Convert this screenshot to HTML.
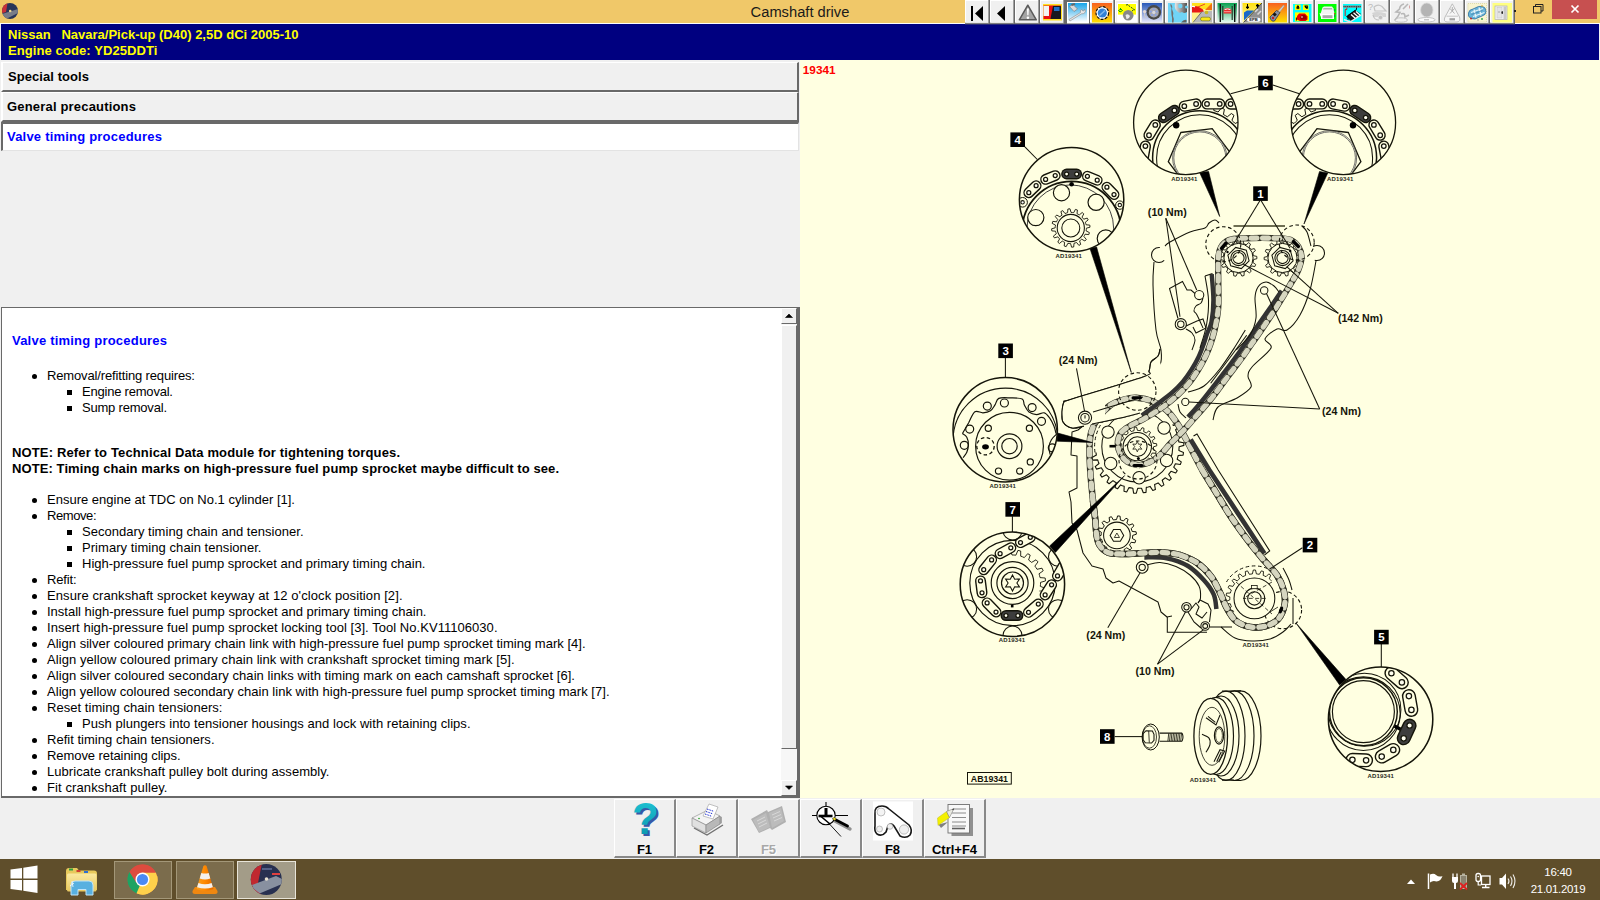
<!DOCTYPE html>
<html><head><meta charset="utf-8"><title>Camshaft drive</title>
<style>
*{margin:0;padding:0;box-sizing:border-box}
html,body{width:1600px;height:900px;overflow:hidden;background:#f0f0f0;font-family:"Liberation Sans",sans-serif}
.abs{position:absolute}
#titlebar{left:0;top:0;width:1600px;height:23px;background:#f0c869}
#title{left:700px;top:2.6px;width:200px;text-align:center;font-size:14.7px;color:#1a1a1a;line-height:19px}
#closebtn{left:1552px;top:0;width:45px;height:19px;background:#c75050}
#hdr{left:1px;top:24px;width:1598px;height:36px;background:#000080;color:#ffff00;font-weight:bold;font-size:13px;line-height:16px;padding:3px 0 0 7px;white-space:pre}
#hdrline{left:0;top:23px;width:1600px;height:1px;background:#fdfdfd}
#left{left:0;top:60px;width:800px;height:738px;background:#f0f0f0}
.mbtn{left:1px;width:798px;height:30px;background:#f0f0f0;border-top:1px solid #fff;border-left:2px solid #fff;border-right:2px solid #696969;border-bottom:2px solid #696969;font-weight:bold;font-size:13px;line-height:16px;padding:6px 0 0 5px;color:#000}
#msel{left:1px;top:122px;width:798px;height:29px;background:#fff;border-top:2px solid #696969;border-left:2px solid #696969;border-right:1px solid #e3e3e3;border-bottom:1px solid #e3e3e3;font-weight:bold;font-size:13px;line-height:16px;padding:5px 0 0 4px;color:#0000ff}
#txt{left:1px;top:307px;width:799px;height:491px;background:#fff;border-top:1px solid #696969;border-left:1px solid #696969;border-right:3px solid #696969;border-bottom:2px solid #696969;overflow:hidden}
#right{left:800px;top:60px;width:800px;height:738px;background:#ffffe1}
#botbar{left:0;top:798px;width:1600px;height:61px;background:#f0f0f0}
#taskbar{left:0;top:859px;width:1600px;height:41px;background:#5f4e2b}
.ln{position:absolute;white-space:pre;font-size:13px;line-height:16px;color:#000}
.b{font-weight:bold}
.sbb{width:16px;background:#f0f0f0;border-left:1px solid #fff;border-top:1px solid #fff;border-right:1.500px solid #696969;border-bottom:1.500px solid #696969}
</style></head><body>
<div id="titlebar" class="abs"></div>
<div id="title" class="abs">Camshaft drive</div>
<div id="closebtn" class="abs"></div>
<div id="hdrline" class="abs"></div>
<div id="hdr" class="abs">Nissan   Navara/Pick-up (D40) 2,5D dCi 2005-10
<span style="letter-spacing:0.09px">Engine code: YD25DDTi</span></div>
<div id="left" class="abs"></div>
<div class="abs mbtn" style="top:62px;padding-top:6px;letter-spacing:0.07px">Special tools</div>
<div class="abs mbtn" style="top:92px;padding-left:4px;padding-top:6px;letter-spacing:0.18px">General precautions</div>
<div id="msel" class="abs" style="letter-spacing:0.21px">Valve timing procedures</div>
<div id="txt" class="abs"><div class="ln b" style="left:10px;top:25px;letter-spacing:0.214px;color:#0000ff">Valve timing procedures</div>
<div class="ln" style="left:45px;top:60px;letter-spacing:-0.144px">Removal/refitting requires:</div>
<div class="abs" style="left:30px;top:66px;width:5px;height:5px;border-radius:50%;background:#000"></div>
<div class="ln" style="left:80px;top:76px;letter-spacing:-0.211px">Engine removal.</div>
<div class="abs" style="left:65px;top:82px;width:5px;height:5px;background:#000"></div>
<div class="ln" style="left:80px;top:92px;letter-spacing:-0.202px">Sump removal.</div>
<div class="abs" style="left:65px;top:98px;width:5px;height:5px;background:#000"></div>
<div class="ln b" style="left:10px;top:137px;letter-spacing:0.141px">NOTE: Refer to Technical Data module for tightening torques.</div>
<div class="ln b" style="left:10px;top:153px;letter-spacing:0.092px">NOTE: Timing chain marks on high-pressure fuel pump sprocket maybe difficult to see.</div>
<div class="ln" style="left:45px;top:184px;letter-spacing:0.009px">Ensure engine at TDC on No.1 cylinder [1].</div>
<div class="abs" style="left:30px;top:190px;width:5px;height:5px;border-radius:50%;background:#000"></div>
<div class="ln" style="left:45px;top:200px;letter-spacing:-0.422px">Remove:</div>
<div class="abs" style="left:30px;top:206px;width:5px;height:5px;border-radius:50%;background:#000"></div>
<div class="ln" style="left:80px;top:216px;letter-spacing:0.030px">Secondary timing chain and tensioner.</div>
<div class="abs" style="left:65px;top:222px;width:5px;height:5px;background:#000"></div>
<div class="ln" style="left:80px;top:232px;letter-spacing:0.058px">Primary timing chain tensioner.</div>
<div class="abs" style="left:65px;top:238px;width:5px;height:5px;background:#000"></div>
<div class="ln" style="left:80px;top:248px;letter-spacing:-0.008px">High-pressure fuel pump sprocket and primary timing chain.</div>
<div class="abs" style="left:65px;top:254px;width:5px;height:5px;background:#000"></div>
<div class="ln" style="left:45px;top:264px;letter-spacing:-0.169px">Refit:</div>
<div class="abs" style="left:30px;top:270px;width:5px;height:5px;border-radius:50%;background:#000"></div>
<div class="ln" style="left:45px;top:280px;letter-spacing:0.091px">Ensure crankshaft sprocket keyway at 12 o'clock position [2].</div>
<div class="abs" style="left:30px;top:286px;width:5px;height:5px;border-radius:50%;background:#000"></div>
<div class="ln" style="left:45px;top:296px;letter-spacing:0.002px">Install high-pressure fuel pump sprocket and primary timing chain.</div>
<div class="abs" style="left:30px;top:302px;width:5px;height:5px;border-radius:50%;background:#000"></div>
<div class="ln" style="left:45px;top:312px;letter-spacing:0.042px">Insert high-pressure fuel pump sprocket locking tool [3]. Tool No.KV11106030.</div>
<div class="abs" style="left:30px;top:318px;width:5px;height:5px;border-radius:50%;background:#000"></div>
<div class="ln" style="left:45px;top:328px;letter-spacing:0.018px">Align silver coloured primary chain link with high-pressure fuel pump sprocket timing mark [4].</div>
<div class="abs" style="left:30px;top:334px;width:5px;height:5px;border-radius:50%;background:#000"></div>
<div class="ln" style="left:45px;top:344px;letter-spacing:0.063px">Align yellow coloured primary chain link with crankshaft sprocket timing mark [5].</div>
<div class="abs" style="left:30px;top:350px;width:5px;height:5px;border-radius:50%;background:#000"></div>
<div class="ln" style="left:45px;top:360px;letter-spacing:0.062px">Align silver coloured secondary chain links with timing mark on each camshaft sprocket [6].</div>
<div class="abs" style="left:30px;top:366px;width:5px;height:5px;border-radius:50%;background:#000"></div>
<div class="ln" style="left:45px;top:376px;letter-spacing:0.034px">Align yellow coloured secondary chain link with high-pressure fuel pump sprocket timing mark [7].</div>
<div class="abs" style="left:30px;top:382px;width:5px;height:5px;border-radius:50%;background:#000"></div>
<div class="ln" style="left:45px;top:392px;letter-spacing:0.046px">Reset timing chain tensioners:</div>
<div class="abs" style="left:30px;top:398px;width:5px;height:5px;border-radius:50%;background:#000"></div>
<div class="ln" style="left:80px;top:408px;letter-spacing:0.039px">Push plungers into tensioner housings and lock with retaining clips.</div>
<div class="abs" style="left:65px;top:414px;width:5px;height:5px;background:#000"></div>
<div class="ln" style="left:45px;top:424px;letter-spacing:0.020px">Refit timing chain tensioners.</div>
<div class="abs" style="left:30px;top:430px;width:5px;height:5px;border-radius:50%;background:#000"></div>
<div class="ln" style="left:45px;top:440px;letter-spacing:-0.074px">Remove retaining clips.</div>
<div class="abs" style="left:30px;top:446px;width:5px;height:5px;border-radius:50%;background:#000"></div>
<div class="ln" style="left:45px;top:456px;letter-spacing:0.049px">Lubricate crankshaft pulley bolt during assembly.</div>
<div class="abs" style="left:30px;top:462px;width:5px;height:5px;border-radius:50%;background:#000"></div>
<div class="ln" style="left:45px;top:472px;letter-spacing:0.106px">Fit crankshaft pulley.</div>
<div class="abs" style="left:30px;top:478px;width:5px;height:5px;border-radius:50%;background:#000"></div><div class="abs" style="left:779px;top:0;width:16px;height:488px;background:#f7f7f7"></div>
<div class="abs sbb" style="left:779px;top:0;height:16px"></div>
<div class="abs sbb" style="left:779px;top:17px;height:424px"></div>
<div class="abs sbb" style="left:779px;top:472px;height:16px"></div>
<svg class="abs" style="left:779px;top:0" width="16" height="488" viewBox="0 0 16 488"><path d="M4.500 9.500 L8 6 L11.500 9.500Z M4.500 478 L8 481.500 L11.500 478Z" fill="#000" stroke="#000" stroke-width="0.600"/></svg></div>
<div id="right" class="abs"><svg class="abs" style="left:0;top:0" width="800" height="738" viewBox="800 60 800 738" font-family="Liberation Sans, sans-serif"><defs><clipPath id="cpg"><path d="M1137.3 446.6 L1189.9 413.7 L1199.3 446.6 L1191.0 477.6 L1168.3 500.3 L1137.3 508.6 L1106.3 500.3 L1083.6 477.6 L1075.9 455.2Z"/></clipPath>
<clipPath id="ccr"><path d="M1254.4 598.4 L1215 625 L1215 560 L1275 560 L1274 578Z"/></clipPath><clipPath id="c6l"><circle cx="1185.8" cy="122.4" r="52.2"/></clipPath>
<clipPath id="t6"><path d="M1199.8 157.9 L1218.8 87.9 L1269.8 87.9 L1269.8 121.9Z"/></clipPath>
<clipPath id="c4"><circle cx="1071.6" cy="199.6" r="52.2"/></clipPath>
<clipPath id="c3"><circle cx="1005.2" cy="429.8" r="52.2"/></clipPath>
<clipPath id="c7"><circle cx="1012.4" cy="584.3" r="52.2"/></clipPath>
<clipPath id="c7t"><path d="M1004.5 543.0 L1052.5 543.0 L1052.5 595.0 L1024.5 587.0 L1010.5 569.0Z"/></clipPath>
<clipPath id="c5"><circle cx="1380.6" cy="719.3" r="52.2"/></clipPath></defs><path d="M1219.0 223.0 C1218.3 222.5 1216.7 220.0 1215.0 220.0 C1213.3 220.0 1210.7 221.7 1209.0 223.0 C1207.3 224.3 1208.2 226.5 1205.0 228.0 C1201.8 229.5 1195.8 229.7 1190.0 232.0 C1184.2 234.3 1174.2 239.7 1170.0 242.0 C1165.8 244.3 1165.8 245.3 1165.0 246.0" fill="none" stroke="#15150a" stroke-width="1.05" />
<circle cx="1159.0" cy="255.0" r="7.5" fill="none" stroke="#15150a" stroke-width="1.05" stroke-dasharray="30 17" stroke-dashoffset="-6"/>
<path d="M1154.0 262.0 C1153.8 265.8 1152.7 273.7 1153.0 285.0 C1153.3 296.3 1154.7 319.2 1156.0 330.0 C1157.3 340.8 1160.3 344.2 1161.0 350.0 C1161.7 355.8 1162.2 360.0 1160.0 365.0 C1157.8 370.0 1151.3 376.8 1148.0 380.0 C1144.7 383.2 1141.3 383.3 1140.0 384.0" fill="none" stroke="#15150a" stroke-width="1.05" />
<circle cx="1317.0" cy="253.0" r="7.5" fill="none" stroke="#15150a" stroke-width="1.05" stroke-dasharray="30 17" stroke-dashoffset="16"/>
<path d="M1302.0 226.0 C1302.8 227.0 1305.5 228.7 1307.0 232.0 C1308.5 235.3 1310.3 243.7 1311.0 246.0" fill="none" stroke="#15150a" stroke-width="1.05" />
<path d="M1316.0 261.0 C1315.0 265.8 1312.7 281.0 1310.0 290.0 C1307.3 299.0 1303.8 308.3 1300.0 315.0 C1296.2 321.7 1290.8 327.7 1287.0 330.0 C1283.2 332.3 1280.7 327.5 1277.0 329.0 C1273.3 330.5 1266.0 335.8 1265.0 339.0 C1264.0 342.2 1273.2 343.3 1271.0 348.0 C1268.8 352.7 1255.8 362.3 1252.0 367.0 C1248.2 371.7 1248.2 372.7 1248.0 376.0 C1247.8 379.3 1252.8 383.3 1251.0 387.0 C1249.2 390.7 1242.5 394.7 1237.0 398.0 C1231.5 401.3 1222.0 403.3 1218.0 407.0 C1214.0 410.7 1213.8 417.8 1213.0 420.0" fill="none" stroke="#15150a" stroke-width="1.05" />
<path d="M1233.5 226 H1285" fill="none" stroke="#6e6e52" stroke-width="2.2" />
<path d="M1140.0 384.0 C1138.8 385.3 1134.7 388.7 1133.0 392.0 C1131.3 395.3 1130.8 400.7 1130.0 404.0 C1129.2 407.3 1128.3 410.7 1128.0 412.0" fill="none" stroke="#15150a" stroke-width="1.05" />
<path d="M1084.0 425.0 L1078.0 430.0 L1072.0 432.0 L1071.0 455.0 L1077.0 456.0 L1077.0 488.0 L1069.0 492.0 L1071.0 502.0 L1072.0 523.0 L1077.0 530.0 L1083.0 553.0 L1092.0 566.0 L1103.0 569.0 L1106.0 578.0 L1113.0 583.0 L1119.0 581.0 L1158.0 602.0 L1161.0 612.0 L1167.0 617.0 L1172.0 616.0" fill="none" stroke="#15150a" stroke-width="1.05" stroke-linejoin="round"/>
<path d="M1167.3 617 V632.2 H1207" fill="none" stroke="#15150a" stroke-width="1.05" />
<path d="M1210 627 H1232" fill="none" stroke="#15150a" stroke-width="1.05" />
<path d="M1221.0 627.0 C1223.3 628.8 1229.8 635.7 1235.0 638.0 C1240.2 640.3 1246.2 640.8 1252.0 641.0 C1257.8 641.2 1264.8 640.5 1270.0 639.0 C1275.2 637.5 1279.5 634.5 1283.0 632.0 C1286.5 629.5 1289.7 625.3 1291.0 624.0" fill="none" stroke="#15150a" stroke-width="1.05" />
<path d="M1293 598 V624" fill="none" stroke="#15150a" stroke-width="1.05" />
<path d="M1283.0 568.0 C1284.0 570.0 1287.5 576.3 1289.0 580.0 C1290.5 583.7 1291.5 588.3 1292.0 590.0" fill="none" stroke="#15150a" stroke-width="1.05" />
<path d="M1062.0 412.0 C1062.3 410.3 1062.3 404.2 1064.0 402.0 C1065.7 399.8 1058.8 403.2 1072.0 399.0 C1085.2 394.8 1130.2 381.7 1143.0 377.0 C1155.8 372.3 1147.7 373.5 1149.0 371.0 C1150.3 368.5 1149.5 364.5 1151.0 362.0 C1152.5 359.5 1156.5 358.2 1158.0 356.0 C1159.5 353.8 1159.7 350.2 1160.0 349.0" fill="none" stroke="#15150a" stroke-width="1.05" />
<path d="M1062.0 412.0 C1062.2 413.7 1061.3 419.3 1063.0 422.0 C1064.7 424.7 1068.5 427.3 1072.0 428.0 C1075.5 428.7 1082.0 426.3 1084.0 426.0" fill="none" stroke="#15150a" stroke-width="1.05" />
<path d="M1093.0 412.0 L1143.0 397.0" fill="none" stroke="#15150a" stroke-width="1.05" />
<path d="M1092.0 424.0 C1096.7 423.0 1112.0 419.8 1120.0 418.0 C1128.0 416.2 1136.7 413.8 1140.0 413.0" fill="none" stroke="#15150a" stroke-width="1.05" />
<g clip-path="url(#cpg)">
<path d="M1179.0 448.7 L1178.9 450.6 L1183.5 452.4 L1183.1 455.1 L1178.2 455.5 L1177.7 457.3 L1177.2 459.2 L1181.3 461.9 L1180.3 464.5 L1175.4 463.8 L1174.6 465.5 L1173.7 467.2 L1177.2 470.7 L1175.7 473.0 L1171.0 471.3 L1169.8 472.8 L1168.6 474.3 L1171.3 478.5 L1169.4 480.4 L1165.1 477.8 L1163.7 479.0 L1162.2 480.2 L1163.9 484.9 L1161.6 486.4 L1158.1 482.9 L1156.4 483.8 L1154.6 484.6 L1155.4 489.6 L1152.8 490.5 L1150.1 486.4 L1148.2 487.0 L1146.3 487.4 L1146.0 492.4 L1143.3 492.8 L1141.5 488.2 L1139.6 488.3 L1137.7 488.4 L1136.3 493.2 L1133.6 493.1 L1132.8 488.2 L1130.9 487.9 L1129.0 487.6 L1126.7 492.0 L1124.0 491.3 L1124.2 486.3 L1122.4 485.7 L1120.6 484.9 L1117.5 488.8 L1115.0 487.5 L1116.3 482.7 L1114.6 481.7 L1113.0 480.6 L1109.1 483.7 L1107.0 482.0 L1109.2 477.6 L1107.8 476.2 L1106.5 474.8 L1102.0 477.1 L1100.3 474.9 L1103.4 471.0 L1102.3 469.4 L1101.3 467.8 L1096.5 469.1 L1095.2 466.6 L1099.0 463.5 L1098.3 461.7 L1097.7 459.9 L1092.7 460.1 L1092.0 457.4 L1096.4 455.1 L1096.0 453.2 L1095.8 451.3 L1090.9 450.5 L1090.7 447.8 L1095.5 446.4 L1095.6 444.5 L1095.7 442.6 L1091.1 440.8 L1091.5 438.1 L1096.4 437.7 L1096.9 435.9 L1097.4 434.0 L1093.3 431.3 L1094.3 428.7 L1099.2 429.4 L1100.0 427.7 L1100.9 426.0 L1097.4 422.5 L1098.9 420.2 L1103.6 421.9 L1104.8 420.4 L1106.0 418.9 L1103.3 414.7 L1105.2 412.8 L1109.5 415.4 L1110.9 414.2 L1112.4 413.0 L1110.7 408.3 L1113.0 406.8 L1116.5 410.3 L1118.2 409.4 L1120.0 408.6 L1119.2 403.6 L1121.8 402.7 L1124.5 406.8 L1126.4 406.2 L1128.3 405.8 L1128.6 400.8 L1131.3 400.4 L1133.1 405.0 L1135.0 404.9 L1136.9 404.8 L1138.3 400.0 L1141.0 400.1 L1141.8 405.0 L1143.7 405.3 L1145.6 405.6 L1147.9 401.2 L1150.6 401.9 L1150.4 406.9 L1152.2 407.5 L1154.0 408.3 L1157.1 404.4 L1159.6 405.7 L1158.3 410.5 L1160.0 411.5 L1161.6 412.6 L1165.5 409.5 L1167.6 411.2 L1165.4 415.6 L1166.8 417.0 L1168.1 418.4 L1172.6 416.1 L1174.3 418.3 L1171.2 422.2 L1172.3 423.8 L1173.3 425.4 L1178.1 424.1 L1179.4 426.6 L1175.6 429.7 L1176.3 431.5 L1176.9 433.3 L1181.9 433.1 L1182.6 435.8 L1178.2 438.1 L1178.6 440.0 L1178.8 441.9 L1183.7 442.7 L1183.9 445.4 L1179.1 446.8Z" fill="none" stroke="#15150a" stroke-width="1.1" stroke-linejoin="round" />
</g>
<path d="M1095.0 452.5 A42.7 42.7 0 0 1 1158.6 409.6" fill="none" stroke="#15150a" stroke-width="1" stroke-dasharray="3.6 2.6"/>
<circle cx="1137.3" cy="446.6" r="35.5" fill="none" stroke="#15150a" stroke-width="1.05" />
<circle cx="1108.0" cy="432.1" r="6.2" fill="#ffffe1" stroke="#15150a" stroke-width="1.05" />
<circle cx="1164.0" cy="428.0" r="6.2" fill="#ffffe1" stroke="#15150a" stroke-width="1.05" />
<circle cx="1110.7" cy="463.5" r="6.2" fill="#ffffe1" stroke="#15150a" stroke-width="1.05" />
<circle cx="1166.6" cy="460.5" r="6.2" fill="#ffffe1" stroke="#15150a" stroke-width="1.05" />
<circle cx="1139.1" cy="477.8" r="6.2" fill="#ffffe1" stroke="#15150a" stroke-width="1.05" />
<path d="M1072 399.5 L1143 377 L1150 372 L1158 356 L1170 392 L1141.8 413.5 L1092 424 L1074 428.3 Q1063 424 1062 412 Q1062.5 402 1072 399.5Z" fill="#ffffe1" stroke="none"/>
<path d="M1092.9 500.0 C1092.5 495.5 1091.0 481.9 1090.4 473.0 C1089.8 464.1 1089.3 453.4 1089.5 446.6 C1089.7 439.8 1089.9 436.8 1091.3 432.0 C1092.7 427.2 1094.9 422.4 1098.0 418.0 C1101.1 413.6 1105.7 408.6 1110.0 405.5 C1114.3 402.4 1119.6 400.8 1124.0 399.5 C1128.4 398.2 1131.7 397.5 1136.4 397.8 C1141.1 398.1 1147.4 399.2 1152.4 401.3 C1157.4 403.4 1162.4 406.5 1166.6 410.2 C1170.8 413.9 1174.0 418.5 1177.3 423.5 C1180.6 428.5 1182.3 432.2 1186.5 440.0 C1190.7 447.8 1197.2 461.1 1202.2 470.0 C1207.2 478.9 1211.7 485.4 1216.4 493.1 C1221.1 500.8 1225.3 508.2 1230.6 516.2 C1235.9 524.2 1242.8 533.7 1248.4 541.1 C1254.0 548.5 1259.7 555.1 1264.4 560.7 C1269.1 566.3 1273.6 570.0 1276.8 574.9 C1280.0 579.8 1282.4 585.4 1283.7 590.4 C1285.0 595.4 1285.5 600.0 1284.6 604.7 C1283.7 609.5 1281.5 615.4 1278.4 618.9 C1275.3 622.4 1270.7 624.7 1266.0 626.0 C1261.3 627.3 1255.0 627.8 1250.0 626.9 C1245.0 626.0 1239.6 623.8 1235.8 620.7 C1232.0 617.6 1229.6 613.0 1226.9 608.2 C1224.2 603.5 1222.5 597.5 1219.8 592.2 C1217.1 586.9 1214.8 581.2 1210.9 576.2 C1207.0 571.2 1201.9 566.1 1196.6 562.5 C1191.3 558.9 1184.8 556.2 1178.9 554.5 C1173.0 552.8 1167.0 552.6 1161.1 552.4 C1155.2 552.1 1149.8 552.7 1143.3 553.0 C1136.8 553.3 1127.9 554.1 1122.0 554.0 C1116.1 553.9 1111.5 554.0 1107.8 552.5 C1104.0 551.0 1101.4 547.9 1099.5 545.0 C1097.6 542.1 1097.3 539.5 1096.6 535.3 C1095.9 531.1 1095.9 525.9 1095.3 520.0 C1094.7 514.1 1093.3 503.3 1092.9 500.0" fill="none" stroke="#323226" stroke-width="6.5" />
<path d="M1092.9 500.0 C1092.5 495.5 1091.0 481.9 1090.4 473.0 C1089.8 464.1 1089.3 453.4 1089.5 446.6 C1089.7 439.8 1089.9 436.8 1091.3 432.0 C1092.7 427.2 1094.9 422.4 1098.0 418.0 C1101.1 413.6 1105.7 408.6 1110.0 405.5 C1114.3 402.4 1119.6 400.8 1124.0 399.5 C1128.4 398.2 1131.7 397.5 1136.4 397.8 C1141.1 398.1 1147.4 399.2 1152.4 401.3 C1157.4 403.4 1162.4 406.5 1166.6 410.2 C1170.8 413.9 1174.0 418.5 1177.3 423.5 C1180.6 428.5 1182.3 432.2 1186.5 440.0 C1190.7 447.8 1197.2 461.1 1202.2 470.0 C1207.2 478.9 1211.7 485.4 1216.4 493.1 C1221.1 500.8 1225.3 508.2 1230.6 516.2 C1235.9 524.2 1242.8 533.7 1248.4 541.1 C1254.0 548.5 1259.7 555.1 1264.4 560.7 C1269.1 566.3 1273.6 570.0 1276.8 574.9 C1280.0 579.8 1282.4 585.4 1283.7 590.4 C1285.0 595.4 1285.5 600.0 1284.6 604.7 C1283.7 609.5 1281.5 615.4 1278.4 618.9 C1275.3 622.4 1270.7 624.7 1266.0 626.0 C1261.3 627.3 1255.0 627.8 1250.0 626.9 C1245.0 626.0 1239.6 623.8 1235.8 620.7 C1232.0 617.6 1229.6 613.0 1226.9 608.2 C1224.2 603.5 1222.5 597.5 1219.8 592.2 C1217.1 586.9 1214.8 581.2 1210.9 576.2 C1207.0 571.2 1201.9 566.1 1196.6 562.5 C1191.3 558.9 1184.8 556.2 1178.9 554.5 C1173.0 552.8 1167.0 552.6 1161.1 552.4 C1155.2 552.1 1149.8 552.7 1143.3 553.0 C1136.8 553.3 1127.9 554.1 1122.0 554.0 C1116.1 553.9 1111.5 554.0 1107.8 552.5 C1104.0 551.0 1101.4 547.9 1099.5 545.0 C1097.6 542.1 1097.3 539.5 1096.6 535.3 C1095.9 531.1 1095.9 525.9 1095.3 520.0 C1094.7 514.1 1093.3 503.3 1092.9 500.0" fill="none" stroke="#d6d6c0" stroke-width="5.30" stroke-dasharray="5.65 5.65" stroke-linecap="round" />
<path d="M1190.6 439.5 L1209.3 470.0 L1264.4 553.5" fill="none" stroke="#333333" stroke-width="4.7" stroke-linejoin="round"/>
<path d="M1193.5 436.0 L1197.0 434.0 L1218.2 470.0 L1269.7 550.9 L1264.5 555.0" fill="none" stroke="#15150a" stroke-width="1.05" />
<path d="M1144.4 557.4 C1148.1 557.5 1159.3 556.8 1166.6 558.2 C1173.9 559.6 1181.8 562.3 1188.0 566.0 C1194.2 569.7 1199.7 575.5 1204.0 580.2 C1208.3 584.9 1211.6 589.6 1213.7 594.4 C1215.8 599.2 1216.0 606.6 1216.4 609.0" fill="none" stroke="#333333" stroke-width="4.5" />
<path d="M1147.0 565.0 C1149.2 564.6 1155.2 562.2 1160.0 562.5 C1164.8 562.8 1171.0 564.4 1176.0 566.5 C1181.0 568.6 1186.2 571.8 1190.0 575.0 C1193.8 578.2 1197.2 582.2 1199.0 586.0 C1200.8 589.8 1200.7 595.2 1200.5 598.0 C1200.3 600.8 1198.4 602.2 1198.0 603.0" fill="none" stroke="#15150a" stroke-width="1.05" />
<path d="M1198.0 603.0 L1200.0 600.0 L1208.0 604.0 L1211.0 610.0 L1209.5 622.0" fill="none" stroke="#15150a" stroke-width="1.05" />
<path d="M1191.0 609.0 L1196.0 603.0 L1199.0 607.0 L1196.0 614.0 L1202.0 618.0 L1207.0 612.0" fill="none" stroke="#15150a" stroke-width="1.05" />
<path d="M1188.0 612.0 L1194.0 622.0 L1201.0 628.0" fill="none" stroke="#15150a" stroke-width="1.05" />
<path d="M1211.7 274.2 C1212.0 278.5 1213.4 292.0 1213.4 300.0 C1213.4 308.0 1212.5 316.5 1211.5 322.0 C1210.5 327.5 1208.5 329.4 1207.3 333.0 C1206.0 336.6 1205.4 339.4 1204.0 343.3 C1202.6 347.2 1200.8 352.2 1198.7 356.7 C1196.6 361.1 1194.0 365.8 1191.3 370.0 C1188.6 374.2 1185.9 378.2 1182.7 382.0 C1179.5 385.8 1175.8 389.4 1172.0 392.7 C1168.2 396.0 1165.0 398.2 1160.0 402.0 C1155.0 405.8 1144.8 413.2 1141.8 415.5" fill="none" stroke="#333333" stroke-width="4.4" />
<path d="M1205.0 276.0 C1205.6 280.0 1208.2 291.8 1208.5 300.0 C1208.8 308.2 1207.9 317.0 1206.5 325.0 C1205.1 333.0 1201.1 344.2 1200.0 348.0" fill="none" stroke="#15150a" stroke-width="1.05" />
<path d="M1205 276 L1212.5 273.5" fill="none" stroke="#15150a" stroke-width="1.05" />
<path d="M1281.7 290.8 C1279.8 293.7 1274.1 302.0 1270.0 308.0 C1265.9 314.0 1262.3 319.1 1257.1 326.6 C1251.8 334.2 1244.9 344.4 1238.5 353.3 C1232.1 362.2 1225.2 371.2 1218.5 379.9 C1211.8 388.6 1203.6 399.1 1198.5 405.3 C1193.4 411.5 1189.8 415.1 1188.0 417.0" fill="none" stroke="#333333" stroke-width="4.5" />
<path d="M1245.3 330.0 C1243.5 332.9 1238.9 340.9 1234.7 347.3 C1230.5 353.8 1225.1 362.2 1220.0 368.7 C1214.9 375.1 1209.3 382.1 1204.0 386.0 C1198.7 389.9 1190.7 391.0 1188.0 392.0" fill="none" stroke="#15150a" stroke-width="1.05" />
<path d="M1246.7 335.3 L1210.7 383.3" fill="none" stroke="#15150a" stroke-width="1.05" />
<circle cx="1264.2" cy="290.5" r="3.7" fill="none" stroke="#15150a" stroke-width="1.05" />
<path d="M1236.0 350.0 C1238.3 347.5 1246.7 340.3 1250.0 335.0 C1253.3 329.7 1255.2 324.2 1256.0 318.0 C1256.8 311.8 1254.7 303.2 1255.0 298.0 C1255.3 292.8 1256.2 289.7 1258.0 287.0 C1259.8 284.3 1263.3 282.2 1266.0 282.0 C1268.7 281.8 1271.8 284.3 1274.0 286.0 C1276.2 287.7 1278.2 291.0 1279.0 292.0" fill="none" stroke="#15150a" stroke-width="1.05" />
<path d="M1186.0 418.0 C1185.0 417.0 1181.3 414.3 1180.0 412.0 C1178.7 409.7 1178.3 405.3 1178.0 404.0" fill="none" stroke="#15150a" stroke-width="1.05" />
<circle cx="1185.3" cy="401.9" r="3.6" fill="none" stroke="#15150a" stroke-width="1.05" />
<path d="M1105 389.3 L1072 399.5 Q1062.5 402 1062 412 Q1063 424 1074 428.3 L1092 424 L1105 421Z" fill="#ffffe1" stroke="none"/>
<path d="M1062.0 412.0 C1062.3 410.3 1062.3 404.2 1064.0 402.0 C1065.7 399.8 1058.8 403.2 1072.0 399.0 C1085.2 394.8 1130.2 381.7 1143.0 377.0 C1155.8 372.3 1147.7 373.5 1149.0 371.0 C1150.3 368.5 1149.5 364.5 1151.0 362.0 C1152.5 359.5 1156.5 358.2 1158.0 356.0 C1159.5 353.8 1159.7 350.2 1160.0 349.0" fill="none" stroke="#15150a" stroke-width="1.05" />
<path d="M1062.0 412.0 C1062.2 413.7 1061.3 419.3 1063.0 422.0 C1064.7 424.7 1068.5 427.3 1072.0 428.0 C1075.5 428.7 1082.0 426.3 1084.0 426.0" fill="none" stroke="#15150a" stroke-width="1.05" />
<path d="M1093.0 412.0 L1143.0 397.0" fill="none" stroke="#15150a" stroke-width="1.05" />
<path d="M1092.0 424.0 C1096.7 423.0 1112.0 419.8 1120.0 418.0 C1128.0 416.2 1136.7 413.8 1140.0 413.0" fill="none" stroke="#15150a" stroke-width="1.05" />
<path d="M1153.4 448.2 L1153.2 449.6 L1156.2 451.3 L1155.6 453.3 L1152.2 453.0 L1151.6 454.3 L1150.9 455.5 L1153.0 458.2 L1151.6 459.8 L1148.6 458.2 L1147.6 459.1 L1146.4 460.0 L1147.4 463.3 L1145.5 464.3 L1143.3 461.6 L1142.0 462.1 L1140.6 462.5 L1140.2 465.9 L1138.1 466.1 L1137.1 462.8 L1135.7 462.7 L1134.3 462.5 L1132.6 465.5 L1130.6 464.9 L1130.9 461.5 L1129.6 460.9 L1128.4 460.2 L1125.7 462.3 L1124.1 460.9 L1125.7 457.9 L1124.8 456.9 L1123.9 455.7 L1120.6 456.7 L1119.6 454.8 L1122.3 452.6 L1121.8 451.3 L1121.4 449.9 L1118.0 449.5 L1117.8 447.4 L1121.1 446.4 L1121.2 445.0 L1121.4 443.6 L1118.4 441.9 L1119.0 439.9 L1122.4 440.2 L1123.0 438.9 L1123.7 437.7 L1121.6 435.0 L1123.0 433.4 L1126.0 435.0 L1127.0 434.1 L1128.2 433.2 L1127.2 429.9 L1129.1 428.9 L1131.3 431.6 L1132.6 431.1 L1134.0 430.7 L1134.4 427.3 L1136.5 427.1 L1137.5 430.4 L1138.9 430.5 L1140.3 430.7 L1142.0 427.7 L1144.0 428.3 L1143.7 431.7 L1145.0 432.3 L1146.2 433.0 L1148.9 430.9 L1150.5 432.3 L1148.9 435.3 L1149.8 436.3 L1150.7 437.5 L1154.0 436.5 L1155.0 438.4 L1152.3 440.6 L1152.8 441.9 L1153.2 443.3 L1156.6 443.7 L1156.8 445.8 L1153.5 446.8Z" fill="#ffffe1" stroke="#15150a" stroke-width="0.9" stroke-linejoin="round" />
<circle cx="1137.3" cy="446.6" r="14.2" fill="none" stroke="#15150a" stroke-width="1.05" />
<circle cx="1137.3" cy="446.6" r="9.8" fill="none" stroke="#15150a" stroke-width="1.05" />
<path d="M1137.3 441.4 L1138.6 444.3 L1141.8 444.0 L1139.9 446.6 L1141.8 449.2 L1138.6 448.9 L1137.3 451.8 L1136.0 448.9 L1132.8 449.2 L1134.7 446.6 L1132.8 444.0 L1136.0 444.3Z" fill="none" stroke="#15150a" stroke-width="0.8" />
<path d="M1253.4 261.0 L1253.0 262.5 L1255.7 264.5 L1254.8 266.6 L1251.5 265.9 L1250.6 267.2 L1249.6 268.3 L1251.2 271.3 L1249.4 272.8 L1246.7 270.8 L1245.4 271.5 L1244.1 272.1 L1244.1 275.5 L1241.9 276.1 L1240.4 273.1 L1238.9 273.2 L1237.4 273.2 L1236.0 276.2 L1233.7 275.8 L1233.6 272.4 L1232.2 271.9 L1230.9 271.2 L1228.3 273.3 L1226.5 271.9 L1227.9 268.9 L1226.9 267.8 L1225.9 266.6 L1222.7 267.4 L1221.6 265.3 L1224.2 263.2 L1223.8 261.7 L1223.5 260.3 L1220.2 259.6 L1220.1 257.3 L1223.4 256.5 L1223.6 255.0 L1224.0 253.5 L1221.3 251.5 L1222.2 249.4 L1225.5 250.1 L1226.4 248.8 L1227.4 247.7 L1225.8 244.7 L1227.6 243.2 L1230.3 245.2 L1231.6 244.5 L1232.9 243.9 L1232.9 240.5 L1235.1 239.9 L1236.6 242.9 L1238.1 242.8 L1239.6 242.8 L1241.0 239.8 L1243.3 240.2 L1243.4 243.6 L1244.8 244.1 L1246.1 244.8 L1248.7 242.7 L1250.5 244.1 L1249.1 247.1 L1250.1 248.2 L1251.1 249.4 L1254.3 248.6 L1255.4 250.7 L1252.8 252.8 L1253.2 254.3 L1253.5 255.7 L1256.8 256.4 L1256.9 258.7 L1253.6 259.5Z" fill="#ffffe1" stroke="#15150a" stroke-width="0.9" stroke-linejoin="round" />
<circle cx="1238.5" cy="258.0" r="14.6" fill="none" stroke="#15150a" stroke-width="1.0" />
<path d="M1249.1 260.8 L1241.3 268.6 L1230.7 265.8 L1227.9 255.2 L1235.7 247.4 L1246.3 250.2Z" fill="none" stroke="#15150a" stroke-width="1.05" />
<circle cx="1238.5" cy="258.0" r="7.6" fill="none" stroke="#15150a" stroke-width="1.05" />
<circle cx="1238.5" cy="258.0" r="5.6" fill="none" stroke="#15150a" stroke-width="1.05" />
<path d="M1297.4 261.0 L1297.0 262.5 L1299.7 264.5 L1298.8 266.6 L1295.5 265.9 L1294.6 267.2 L1293.6 268.3 L1295.2 271.3 L1293.4 272.8 L1290.7 270.8 L1289.4 271.5 L1288.1 272.1 L1288.1 275.5 L1285.9 276.1 L1284.4 273.1 L1282.9 273.2 L1281.4 273.2 L1280.0 276.2 L1277.7 275.8 L1277.6 272.4 L1276.2 271.9 L1274.9 271.2 L1272.3 273.3 L1270.5 271.9 L1271.9 268.9 L1270.9 267.8 L1269.9 266.6 L1266.7 267.4 L1265.6 265.3 L1268.2 263.2 L1267.8 261.7 L1267.5 260.3 L1264.2 259.6 L1264.1 257.3 L1267.4 256.5 L1267.6 255.0 L1268.0 253.5 L1265.3 251.5 L1266.2 249.4 L1269.5 250.1 L1270.4 248.8 L1271.4 247.7 L1269.8 244.7 L1271.6 243.2 L1274.3 245.2 L1275.6 244.5 L1276.9 243.9 L1276.9 240.5 L1279.1 239.9 L1280.6 242.9 L1282.1 242.8 L1283.6 242.8 L1285.0 239.8 L1287.3 240.2 L1287.4 243.6 L1288.8 244.1 L1290.1 244.8 L1292.7 242.7 L1294.5 244.1 L1293.1 247.1 L1294.1 248.2 L1295.1 249.4 L1298.3 248.6 L1299.4 250.7 L1296.8 252.8 L1297.2 254.3 L1297.5 255.7 L1300.8 256.4 L1300.9 258.7 L1297.6 259.5Z" fill="#ffffe1" stroke="#15150a" stroke-width="0.9" stroke-linejoin="round" />
<circle cx="1282.5" cy="258.0" r="14.6" fill="none" stroke="#15150a" stroke-width="1.0" />
<path d="M1293.1 260.8 L1285.3 268.6 L1274.7 265.8 L1271.9 255.2 L1279.7 247.4 L1290.3 250.2Z" fill="none" stroke="#15150a" stroke-width="1.05" />
<circle cx="1282.5" cy="258.0" r="7.6" fill="none" stroke="#15150a" stroke-width="1.05" />
<circle cx="1282.5" cy="258.0" r="5.6" fill="none" stroke="#15150a" stroke-width="1.05" />
<path d="M1138.2 465.3 C1136.4 464.7 1130.5 463.7 1127.5 461.8 C1124.5 459.9 1122.0 456.9 1120.4 453.8 C1118.8 450.7 1117.7 446.7 1117.8 443.1 C1117.9 439.5 1119.1 435.4 1121.3 432.4 C1123.5 429.4 1127.4 427.5 1131.1 425.3 C1134.8 423.1 1138.3 422.1 1143.5 419.1 C1148.7 416.1 1156.4 411.5 1162.0 407.5 C1167.6 403.5 1172.8 399.3 1177.3 395.3 C1181.8 391.3 1185.2 387.5 1188.7 383.3 C1192.2 379.1 1195.2 374.4 1198.0 370.0 C1200.8 365.6 1203.2 361.1 1205.3 356.7 C1207.4 352.2 1209.1 348.1 1210.7 343.3 C1212.3 338.5 1213.8 333.9 1215.0 328.0 C1216.2 322.1 1217.7 315.5 1218.2 308.0 C1218.8 300.5 1218.3 291.3 1218.3 283.0 C1218.3 274.7 1217.9 264.2 1218.3 258.3 C1218.7 252.4 1219.0 250.6 1220.8 247.5 C1222.6 244.4 1225.2 241.5 1229.0 240.0 C1232.8 238.5 1234.8 238.6 1243.3 238.3 C1251.8 238.0 1272.0 238.0 1280.0 238.3 C1288.0 238.6 1287.9 238.6 1291.0 240.0 C1294.1 241.4 1296.8 244.2 1298.5 247.0 C1300.2 249.8 1301.5 253.2 1301.5 257.0 C1301.5 260.8 1300.2 265.3 1298.3 270.0 C1296.4 274.7 1293.6 278.9 1290.0 285.0 C1286.4 291.1 1281.2 299.6 1276.7 306.7 C1272.2 313.8 1267.1 321.4 1263.0 327.5 C1258.9 333.6 1255.4 338.4 1252.0 343.3 C1248.6 348.2 1245.9 352.2 1242.7 356.7 C1239.5 361.1 1236.0 365.6 1232.7 370.0 C1229.4 374.4 1226.0 378.9 1222.7 383.3 C1219.4 387.8 1216.0 392.5 1212.7 396.7 C1209.4 400.9 1205.9 404.9 1202.7 408.7 C1199.5 412.5 1196.6 415.5 1193.3 419.3 C1190.0 423.1 1186.5 427.3 1182.7 431.3 C1178.9 435.3 1174.6 439.3 1170.7 443.3 C1166.8 447.3 1163.1 452.3 1159.5 455.5 C1155.9 458.7 1152.5 461.0 1148.9 462.6 C1145.4 464.2 1140.0 464.9 1138.2 465.3" fill="none" stroke="#323226" stroke-width="6.3" />
<path d="M1138.2 465.3 C1136.4 464.7 1130.5 463.7 1127.5 461.8 C1124.5 459.9 1122.0 456.9 1120.4 453.8 C1118.8 450.7 1117.7 446.7 1117.8 443.1 C1117.9 439.5 1119.1 435.4 1121.3 432.4 C1123.5 429.4 1127.4 427.5 1131.1 425.3 C1134.8 423.1 1138.3 422.1 1143.5 419.1 C1148.7 416.1 1156.4 411.5 1162.0 407.5 C1167.6 403.5 1172.8 399.3 1177.3 395.3 C1181.8 391.3 1185.2 387.5 1188.7 383.3 C1192.2 379.1 1195.2 374.4 1198.0 370.0 C1200.8 365.6 1203.2 361.1 1205.3 356.7 C1207.4 352.2 1209.1 348.1 1210.7 343.3 C1212.3 338.5 1213.8 333.9 1215.0 328.0 C1216.2 322.1 1217.7 315.5 1218.2 308.0 C1218.8 300.5 1218.3 291.3 1218.3 283.0 C1218.3 274.7 1217.9 264.2 1218.3 258.3 C1218.7 252.4 1219.0 250.6 1220.8 247.5 C1222.6 244.4 1225.2 241.5 1229.0 240.0 C1232.8 238.5 1234.8 238.6 1243.3 238.3 C1251.8 238.0 1272.0 238.0 1280.0 238.3 C1288.0 238.6 1287.9 238.6 1291.0 240.0 C1294.1 241.4 1296.8 244.2 1298.5 247.0 C1300.2 249.8 1301.5 253.2 1301.5 257.0 C1301.5 260.8 1300.2 265.3 1298.3 270.0 C1296.4 274.7 1293.6 278.9 1290.0 285.0 C1286.4 291.1 1281.2 299.6 1276.7 306.7 C1272.2 313.8 1267.1 321.4 1263.0 327.5 C1258.9 333.6 1255.4 338.4 1252.0 343.3 C1248.6 348.2 1245.9 352.2 1242.7 356.7 C1239.5 361.1 1236.0 365.6 1232.7 370.0 C1229.4 374.4 1226.0 378.9 1222.7 383.3 C1219.4 387.8 1216.0 392.5 1212.7 396.7 C1209.4 400.9 1205.9 404.9 1202.7 408.7 C1199.5 412.5 1196.6 415.5 1193.3 419.3 C1190.0 423.1 1186.5 427.3 1182.7 431.3 C1178.9 435.3 1174.6 439.3 1170.7 443.3 C1166.8 447.3 1163.1 452.3 1159.5 455.5 C1155.9 458.7 1152.5 461.0 1148.9 462.6 C1145.4 464.2 1140.0 464.9 1138.2 465.3" fill="none" stroke="#d6d6c0" stroke-width="5.10" stroke-dasharray="5.85 5.45" stroke-linecap="round" />
<path d="M1221.6 248.4 L1226 243" fill="none" stroke="#000" stroke-width="3.4" stroke-linecap="round"/>
<path d="M1293.4 241.6 L1298.4 246.4" fill="none" stroke="#000" stroke-width="3.4" stroke-linecap="round"/>
<path d="M1134 465.4 L1142 465.4" fill="none" stroke="#000" stroke-width="3" stroke-linecap="round"/>
<path d="M1133 397.8 L1140.5 397.8" fill="none" stroke="#000" stroke-width="3" stroke-linecap="round"/>
<circle cx="1138.4" cy="458.5" r="1.5" fill="#000"/>
<rect x="1109.5" y="444.9" width="6" height="2.6" fill="#000"/>
<circle cx="1227.5" cy="252" r="1.2" fill="#000"/><circle cx="1290.2" cy="251" r="1.2" fill="#000"/>
<circle cx="1223.3" cy="244.2" r="17.5" fill="none" stroke="#15150a" stroke-width="1.1" stroke-dasharray="3.6 2.6"/>
<circle cx="1296.7" cy="242.5" r="17.5" fill="none" stroke="#15150a" stroke-width="1.1" stroke-dasharray="3.6 2.6"/>
<circle cx="1137.3" cy="391.5" r="18.7" fill="none" stroke="#15150a" stroke-width="1.1" stroke-dasharray="3.6 2.6"/>
<circle cx="1138.0" cy="460.0" r="19.0" fill="none" stroke="#15150a" stroke-width="1.1" stroke-dasharray="3.6 2.6"/>
<circle cx="1282.9" cy="610.0" r="18.7" fill="none" stroke="#15150a" stroke-width="1.1" stroke-dasharray="3.6 2.6"/>
<path d="M1132.6 537.0 L1132.4 538.5 L1135.7 540.4 L1135.0 542.8 L1131.1 542.3 L1130.4 543.6 L1129.5 544.9 L1131.7 548.1 L1130.0 549.9 L1126.7 547.8 L1125.5 548.7 L1124.1 549.5 L1124.7 553.3 L1122.4 554.1 L1120.4 550.8 L1118.9 551.1 L1117.3 551.2 L1116.2 554.9 L1113.7 554.6 L1113.4 550.8 L1111.9 550.4 L1110.4 549.8 L1107.8 552.6 L1105.7 551.4 L1107.0 547.7 L1105.9 546.7 L1104.8 545.6 L1101.2 547.0 L1099.9 544.9 L1102.7 542.2 L1102.1 540.8 L1101.6 539.3 L1097.7 539.0 L1097.4 536.6 L1101.1 535.4 L1101.2 533.8 L1101.4 532.3 L1098.1 530.4 L1098.8 528.0 L1102.7 528.5 L1103.4 527.2 L1104.3 525.9 L1102.1 522.7 L1103.8 520.9 L1107.1 523.0 L1108.3 522.1 L1109.7 521.3 L1109.1 517.5 L1111.4 516.7 L1113.4 520.0 L1114.9 519.7 L1116.5 519.6 L1117.6 515.9 L1120.1 516.2 L1120.4 520.0 L1121.9 520.4 L1123.4 521.0 L1126.0 518.2 L1128.1 519.4 L1126.8 523.1 L1127.9 524.1 L1129.0 525.2 L1132.6 523.8 L1133.9 525.9 L1131.1 528.6 L1131.7 530.0 L1132.2 531.5 L1136.1 531.8 L1136.4 534.2 L1132.7 535.4Z" fill="#ffffe1" stroke="#15150a" stroke-width="1.0" stroke-linejoin="round" />
<circle cx="1116.9" cy="535.4" r="13.3" fill="none" stroke="#15150a" stroke-width="1.05" />
<path d="M1123.7 535.4 L1120.3 541.3 L1113.5 541.3 L1110.1 535.4 L1113.5 529.5 L1120.3 529.5Z" fill="none" stroke="#15150a" stroke-width="1.05" />
<path d="M1116.9 533.0 L1119.5 537.5 L1114.3 537.5Z" fill="none" stroke="#15150a" stroke-width="0.8" />
<path d="M1178.9 554.5 C1175.9 554.1 1167.0 552.6 1161.1 552.4 C1155.2 552.1 1149.8 552.7 1143.3 553.0 C1136.8 553.3 1127.9 554.1 1122.0 554.0 C1116.1 553.9 1111.5 554.0 1107.8 552.5 C1104.0 551.0 1101.4 547.9 1099.5 545.0 C1097.6 542.1 1097.3 539.5 1096.6 535.3 C1095.9 531.1 1095.9 525.9 1095.3 520.0 C1094.7 514.1 1093.3 503.3 1092.9 500.0" fill="none" stroke="#323226" stroke-width="6.5" />
<path d="M1178.9 554.5 C1175.9 554.1 1167.0 552.6 1161.1 552.4 C1155.2 552.1 1149.8 552.7 1143.3 553.0 C1136.8 553.3 1127.9 554.1 1122.0 554.0 C1116.1 553.9 1111.5 554.0 1107.8 552.5 C1104.0 551.0 1101.4 547.9 1099.5 545.0 C1097.6 542.1 1097.3 539.5 1096.6 535.3 C1095.9 531.1 1095.9 525.9 1095.3 520.0 C1094.7 514.1 1093.3 503.3 1092.9 500.0" fill="none" stroke="#d6d6c0" stroke-width="5.30" stroke-dasharray="5.65 5.65" stroke-linecap="round" />
<path d="M1226.5 608 A28.5 28.5 0 0 1 1272 576" fill="none"/>
<g clip-path="url(#ccr)">
<path d="M1279.0 598.4 L1279.0 599.9 L1282.7 601.3 L1282.3 603.6 L1278.4 603.8 L1278.0 605.3 L1277.5 606.8 L1280.7 609.2 L1279.7 611.2 L1275.9 610.4 L1275.1 611.7 L1274.2 613.0 L1276.6 616.1 L1275.1 617.8 L1271.6 615.9 L1270.5 617.0 L1269.3 618.0 L1270.7 621.7 L1268.8 622.9 L1266.0 620.1 L1264.6 620.8 L1263.2 621.4 L1263.5 625.3 L1261.3 625.9 L1259.4 622.5 L1257.9 622.7 L1256.4 622.9 L1255.5 626.8 L1253.3 626.8 L1252.4 622.9 L1250.9 622.7 L1249.4 622.5 L1247.5 625.9 L1245.3 625.3 L1245.6 621.4 L1244.2 620.8 L1242.8 620.1 L1240.0 622.9 L1238.1 621.7 L1239.5 618.0 L1238.3 617.0 L1237.2 615.9 L1233.7 617.8 L1232.2 616.1 L1234.6 613.0 L1233.7 611.7 L1232.9 610.4 L1229.1 611.2 L1228.1 609.2 L1231.3 606.8 L1230.8 605.3 L1230.4 603.8 L1226.5 603.6 L1226.1 601.3 L1229.8 599.9 L1229.8 598.4 L1229.8 596.9 L1226.1 595.5 L1226.5 593.2 L1230.4 593.0 L1230.8 591.5 L1231.3 590.0 L1228.1 587.6 L1229.1 585.6 L1232.9 586.4 L1233.7 585.1 L1234.6 583.8 L1232.2 580.7 L1233.7 579.0 L1237.2 580.9 L1238.3 579.8 L1239.5 578.8 L1238.1 575.1 L1240.0 573.9 L1242.8 576.7 L1244.2 576.0 L1245.6 575.4 L1245.3 571.5 L1247.5 570.9 L1249.4 574.3 L1250.9 574.1 L1252.4 573.9 L1253.3 570.0 L1255.5 570.0 L1256.4 573.9 L1257.9 574.1 L1259.4 574.3 L1261.3 570.9 L1263.5 571.5 L1263.2 575.4 L1264.6 576.0 L1266.0 576.7 L1268.8 573.9 L1270.7 575.1 L1269.3 578.8 L1270.5 579.8 L1271.6 580.9 L1275.1 579.0 L1276.6 580.7 L1274.2 583.8 L1275.1 585.1 L1275.9 586.4 L1279.7 585.6 L1280.7 587.6 L1277.5 590.0 L1278.0 591.5 L1278.4 593.0 L1282.3 593.2 L1282.7 595.5 L1279.0 596.9Z" fill="#ffffe1" stroke="#15150a" stroke-width="0.9" stroke-linejoin="round" />
</g>
<path d="M1226.5 582 A32.5 32.5 0 0 1 1281 579.5" fill="none" stroke="#15150a" stroke-width="1.0" stroke-dasharray="3.6 2.6"/>
<circle cx="1254.4" cy="598.4" r="20.4" fill="#ffffe1" stroke="#15150a" stroke-width="1.05" />
<circle cx="1254.4" cy="598.4" r="10.3" fill="none" stroke="#15150a" stroke-width="1.05" />
<circle cx="1254.4" cy="598.4" r="6.7" fill="none" stroke="#15150a" stroke-width="1.05" />
<rect x="1251.6" y="585.5" width="5.6" height="3.2" fill="#ffffe1" stroke="#15150a" stroke-width="0.8"/>
<path d="M1236 582 L1272 614 M1272 582 L1243 598.4 H1266" fill="none" stroke="#15150a" stroke-width="0.8" stroke-dasharray="4 2.5"/>
<path d="M1202.2 470.0 C1204.6 473.9 1211.7 485.4 1216.4 493.1 C1221.1 500.8 1225.3 508.2 1230.6 516.2 C1235.9 524.2 1242.8 533.7 1248.4 541.1 C1254.0 548.5 1259.7 555.1 1264.4 560.7 C1269.1 566.3 1273.6 570.0 1276.8 574.9 C1280.0 579.8 1282.4 585.4 1283.7 590.4 C1285.0 595.4 1285.5 600.0 1284.6 604.7 C1283.7 609.5 1281.5 615.4 1278.4 618.9 C1275.3 622.4 1270.7 624.7 1266.0 626.0 C1261.3 627.3 1255.0 627.8 1250.0 626.9 C1245.0 626.0 1239.6 623.8 1235.8 620.7 C1232.0 617.6 1229.6 613.0 1226.9 608.2 C1224.2 603.5 1222.5 597.5 1219.8 592.2 C1217.1 586.9 1214.8 581.2 1210.9 576.2 C1207.0 571.2 1201.9 566.1 1196.6 562.5 C1191.3 558.9 1181.9 555.8 1178.9 554.5" fill="none" stroke="#323226" stroke-width="6.5" />
<path d="M1202.2 470.0 C1204.6 473.9 1211.7 485.4 1216.4 493.1 C1221.1 500.8 1225.3 508.2 1230.6 516.2 C1235.9 524.2 1242.8 533.7 1248.4 541.1 C1254.0 548.5 1259.7 555.1 1264.4 560.7 C1269.1 566.3 1273.6 570.0 1276.8 574.9 C1280.0 579.8 1282.4 585.4 1283.7 590.4 C1285.0 595.4 1285.5 600.0 1284.6 604.7 C1283.7 609.5 1281.5 615.4 1278.4 618.9 C1275.3 622.4 1270.7 624.7 1266.0 626.0 C1261.3 627.3 1255.0 627.8 1250.0 626.9 C1245.0 626.0 1239.6 623.8 1235.8 620.7 C1232.0 617.6 1229.6 613.0 1226.9 608.2 C1224.2 603.5 1222.5 597.5 1219.8 592.2 C1217.1 586.9 1214.8 581.2 1210.9 576.2 C1207.0 571.2 1201.9 566.1 1196.6 562.5 C1191.3 558.9 1181.9 555.8 1178.9 554.5" fill="none" stroke="#d6d6c0" stroke-width="5.30" stroke-dasharray="5.65 5.65" stroke-linecap="round" />
<ellipse cx="1281" cy="610" rx="1.8" ry="3.6" fill="#000" transform="rotate(20 1281 610)"/>
<path d="M1270 612 L1278 607" fill="none" stroke="#15150a" stroke-width="0.8" />
<circle cx="1085.0" cy="417.7" r="6.6" fill="#ffffe1" stroke="#15150a" stroke-width="1.05" />
<circle cx="1085.0" cy="417.7" r="4.2" fill="none" stroke="#15150a" stroke-width="1.05" />
<circle cx="1142.2" cy="567.3" r="5.9" fill="#ffffe1" stroke="#15150a" stroke-width="1.05" />
<circle cx="1142.2" cy="567.3" r="3.1" fill="none" stroke="#15150a" stroke-width="1.05" />
<circle cx="1186.5" cy="607.3" r="4.8" fill="#ffffe1" stroke="#15150a" stroke-width="1.05" />
<circle cx="1186.5" cy="607.3" r="2.6" fill="none" stroke="#15150a" stroke-width="1.05" />
<circle cx="1205.2" cy="626.0" r="4.3" fill="#ffffe1" stroke="#15150a" stroke-width="1.05" />
<circle cx="1205.2" cy="626.0" r="2.4" fill="none" stroke="#15150a" stroke-width="1.05" />
<circle cx="1180.8" cy="324.2" r="5.6" fill="#ffffe1" stroke="#15150a" stroke-width="1.05" />
<circle cx="1180.8" cy="324.2" r="3.2" fill="none" stroke="#15150a" stroke-width="1.05" />
<path d="M1085 415.2 V418.5" fill="none" stroke="#15150a" stroke-width="1.05" />
<circle cx="1199.2" cy="295.0" r="4.6" fill="#ffffe1" stroke="#15150a" stroke-width="1.05" />
<path d="M1195.0 293.5 L1191.0 290.0 L1187.0 290.0 L1182.5 281.5 L1169.5 288.5 L1178.0 318.5" fill="none" stroke="#15150a" stroke-width="1.05" />
<path d="M1203.0 298.0 C1202.7 298.8 1202.2 301.7 1201.0 303.0 C1199.8 304.3 1197.2 304.7 1196.0 306.0 C1194.8 307.3 1193.8 309.5 1194.0 311.0 C1194.2 312.5 1195.5 312.2 1197.0 315.0 C1198.5 317.8 1202.0 325.8 1203.0 328.0" fill="none" stroke="#15150a" stroke-width="1.05" />
<path d="M1186.0 326.0 L1197.0 321.0 L1203.0 319.0 L1206.0 328.0 L1196.0 333.0 L1193.0 327.0" fill="none" stroke="#15150a" stroke-width="1.05" />
<path d="M1186.0 329.0 C1187.0 329.7 1190.5 331.2 1192.0 333.0 C1193.5 334.8 1195.0 337.2 1195.0 340.0 C1195.0 342.8 1192.5 348.3 1192.0 350.0" fill="none" stroke="#15150a" stroke-width="1.05" />
<path d="M1199.6 172.5 L1208.6 171.5 L1219.7 216.5Z" fill="#000" stroke="#000" stroke-width="0.6" stroke-linejoin="round"/>
<path d="M1319.5 171.5 L1327.8 173.0 L1304.0 224.0Z" fill="#000" stroke="#000" stroke-width="0.6" stroke-linejoin="round"/>
<path d="M1089.8 248.0 L1096.6 247.0 L1131.3 372.5Z" fill="#000" stroke="#000" stroke-width="0.6" stroke-linejoin="round"/>
<path d="M1056.8 432.8 L1057.2 441.2 L1092.5 442.6Z" fill="#000" stroke="#000" stroke-width="0.6" stroke-linejoin="round"/>
<path d="M1049.6 546.0 L1055.4 552.4 L1124.6 475.6Z" fill="#000" stroke="#000" stroke-width="0.6" stroke-linejoin="round"/>
<path d="M1339.6 685.0 L1346.0 679.6 L1296.2 623.3Z" fill="#000" stroke="#000" stroke-width="0.6" stroke-linejoin="round"/>
<path d="M1258 86.5 L1230.6 93.8" fill="none" stroke="#15150a" stroke-width="1.05" />
<path d="M1272.8 85 L1299.4 93.8" fill="none" stroke="#15150a" stroke-width="1.05" />
<path d="M1024.9 146.8 L1037.3 159.5" fill="none" stroke="#15150a" stroke-width="1.05" />
<path d="M1005.4 358 V377.7" fill="none" stroke="#15150a" stroke-width="1.05" />
<path d="M1012.4 516.3 V532.3" fill="none" stroke="#15150a" stroke-width="1.05" />
<path d="M1381.3 644 V667.3" fill="none" stroke="#15150a" stroke-width="1.05" />
<path d="M1302.4 547.8 L1269.5 569.1" fill="none" stroke="#15150a" stroke-width="1.05" />
<path d="M1114.7 736.6 H1142.7" fill="none" stroke="#15150a" stroke-width="1.05" />
<path d="M1260 200.6 L1232.5 245.8" fill="none" stroke="#15150a" stroke-width="1.05" />
<path d="M1261 200.6 L1290 248.3" fill="none" stroke="#15150a" stroke-width="1.05" />
<path d="M1338.3 313.3 L1243.3 264.2" fill="none" stroke="#15150a" stroke-width="1.05" />
<path d="M1338.3 313.3 L1286.7 266.7" fill="none" stroke="#15150a" stroke-width="1.05" />
<path d="M1165.8 218.3 L1180 316.7" fill="none" stroke="#15150a" stroke-width="1.05" />
<path d="M1165.8 218.3 L1196.7 290" fill="none" stroke="#15150a" stroke-width="1.05" />
<path d="M1076.5 368.4 L1084.5 411" fill="none" stroke="#15150a" stroke-width="1.05" />
<path d="M1319.7 409 L1188.9 402" fill="none" stroke="#15150a" stroke-width="1.05" />
<path d="M1319.7 409 L1266.5 293.5" fill="none" stroke="#15150a" stroke-width="1.05" />
<path d="M1107.8 627.8 L1140.2 572.6" fill="none" stroke="#15150a" stroke-width="1.05" />
<path d="M1157.5 664.2 L1185.6 611.8" fill="none" stroke="#15150a" stroke-width="1.05" />
<path d="M1157.5 664.2 L1203.2 629.8" fill="none" stroke="#15150a" stroke-width="1.05" />
<rect x="1258.2" y="75.7" width="14.6" height="14.6" fill="#000"/>
<text x="1265.5" y="87.2" font-size="11.5" font-weight="bold" fill="#fff" text-anchor="middle">6</text>
<rect x="1010.4" y="132.4" width="14.6" height="14.6" fill="#000"/>
<text x="1017.7" y="143.9" font-size="11.5" font-weight="bold" fill="#fff" text-anchor="middle">4</text>
<rect x="1253.2" y="186.3" width="14.6" height="14.6" fill="#000"/>
<text x="1260.5" y="197.8" font-size="11.5" font-weight="bold" fill="#fff" text-anchor="middle">1</text>
<rect x="998.3" y="343.5" width="14.6" height="14.6" fill="#000"/>
<text x="1005.6" y="355.0" font-size="11.5" font-weight="bold" fill="#fff" text-anchor="middle">3</text>
<rect x="1005.4" y="502.1" width="14.6" height="14.6" fill="#000"/>
<text x="1012.7" y="513.6" font-size="11.5" font-weight="bold" fill="#fff" text-anchor="middle">7</text>
<rect x="1302.7" y="537.8" width="14.6" height="14.6" fill="#000"/>
<text x="1310.0" y="549.3" font-size="11.5" font-weight="bold" fill="#fff" text-anchor="middle">2</text>
<rect x="1374.1" y="629.8" width="14.6" height="14.6" fill="#000"/>
<text x="1381.4" y="641.3" font-size="11.5" font-weight="bold" fill="#fff" text-anchor="middle">5</text>
<rect x="1100.0" y="729.2" width="14.6" height="14.6" fill="#000"/>
<text x="1107.3" y="740.7" font-size="11.5" font-weight="bold" fill="#fff" text-anchor="middle">8</text>
<text x="1167.3" y="216.0" font-size="10.6" font-weight="bold" fill="#15150a" text-anchor="middle" letter-spacing="0">(10 Nm)</text>
<text x="1360.3" y="321.8" font-size="10.6" font-weight="bold" fill="#15150a" text-anchor="middle" letter-spacing="0">(142 Nm)</text>
<text x="1078.2" y="364.3" font-size="10.6" font-weight="bold" fill="#15150a" text-anchor="middle" letter-spacing="0">(24 Nm)</text>
<text x="1341.5" y="415.2" font-size="10.6" font-weight="bold" fill="#15150a" text-anchor="middle" letter-spacing="0">(24 Nm)</text>
<text x="1105.8" y="638.6" font-size="10.6" font-weight="bold" fill="#15150a" text-anchor="middle" letter-spacing="0">(24 Nm)</text>
<text x="1155.0" y="675.2" font-size="10.6" font-weight="bold" fill="#15150a" text-anchor="middle" letter-spacing="0">(10 Nm)</text>
<text x="1184.4" y="181.0" font-size="6.0" font-weight="bold" fill="#2a2a1a" text-anchor="middle" letter-spacing="0.15">AD19341</text>
<text x="1340.2" y="181.0" font-size="6.0" font-weight="bold" fill="#2a2a1a" text-anchor="middle" letter-spacing="0.15">AD19341</text>
<text x="1068.8" y="257.9" font-size="6.0" font-weight="bold" fill="#2a2a1a" text-anchor="middle" letter-spacing="0.15">AD19341</text>
<text x="1002.8" y="487.9" font-size="6.0" font-weight="bold" fill="#2a2a1a" text-anchor="middle" letter-spacing="0.15">AD19341</text>
<text x="1012.0" y="642.2" font-size="6.0" font-weight="bold" fill="#2a2a1a" text-anchor="middle" letter-spacing="0.15">AD19341</text>
<text x="1255.8" y="646.8" font-size="6.0" font-weight="bold" fill="#2a2a1a" text-anchor="middle" letter-spacing="0.15">AD19341</text>
<text x="1380.8" y="777.6" font-size="6.0" font-weight="bold" fill="#2a2a1a" text-anchor="middle" letter-spacing="0.15">AD19341</text>
<text x="1203.0" y="782.2" font-size="6.0" font-weight="bold" fill="#2a2a1a" text-anchor="middle" letter-spacing="0.15">AD19341</text>
<rect x="967.5" y="772.5" width="43.8" height="11.6" fill="#ffffe1" stroke="#15150a" stroke-width="1"/>
<text x="989.4" y="781.9" font-size="8.8" font-weight="bold" fill="#15150a" text-anchor="middle" letter-spacing="0">AB19341</text>
<text x="802.8" y="74.0" font-size="11.8" font-weight="bold" fill="#ff0000" text-anchor="start" letter-spacing="0">19341</text>
<circle cx="1185.8" cy="122.4" r="52.2" fill="#ffffe1" stroke="none"/>
<g clip-path="url(#c6l)">
<circle cx="1199.8" cy="157.9" r="47.2" fill="none" stroke="#15150a" stroke-width="1.53" />
<circle cx="1199.8" cy="157.9" r="43.2" fill="none" stroke="#15150a" stroke-width="1.06" />
<path d="M1180.8 132.5 L1212.2 128.7 L1231.3 154.1 L1218.8 183.3 L1187.4 187.1 L1168.3 161.7Z" fill="none" stroke="#15150a" stroke-width="1.3" />
<circle cx="1199.8" cy="157.9" r="27.2" fill="none" stroke="#555" stroke-width="0.83" />
<circle cx="1199.8" cy="157.9" r="26.0" fill="none" stroke="#555" stroke-width="0.83" />
<g clip-path="url(#t6)">
<path d="M1249.2 158.9 L1249.1 161.2 L1254.1 163.1 L1253.7 166.3 L1248.4 166.9 L1247.9 169.1 L1247.3 171.3 L1251.8 174.3 L1250.7 177.3 L1245.4 176.8 L1244.5 178.9 L1243.5 180.9 L1247.3 184.7 L1245.6 187.4 L1240.5 185.9 L1239.2 187.7 L1237.8 189.5 L1240.6 194.0 L1238.5 196.3 L1233.8 193.7 L1232.1 195.3 L1230.4 196.7 L1232.2 201.7 L1229.6 203.5 L1225.6 200.0 L1223.6 201.2 L1221.6 202.2 L1222.4 207.5 L1219.5 208.7 L1216.3 204.5 L1214.1 205.2 L1211.9 205.8 L1211.6 211.1 L1208.5 211.7 L1206.2 206.9 L1204.0 207.1 L1201.7 207.3 L1200.3 212.4 L1197.1 212.3 L1195.9 207.1 L1193.7 206.9 L1191.4 206.6 L1189.0 211.3 L1185.9 210.6 L1185.8 205.3 L1183.6 204.6 L1181.5 203.8 L1178.1 207.9 L1175.2 206.5 L1176.2 201.3 L1174.2 200.2 L1172.3 199.0 L1168.2 202.3 L1165.6 200.4 L1167.7 195.5 L1166.0 193.9 L1164.4 192.3 L1159.6 194.7 L1157.5 192.3 L1160.6 188.0 L1159.3 186.1 L1158.0 184.2 L1152.9 185.6 L1151.3 182.8 L1155.2 179.2 L1154.3 177.1 L1153.4 175.0 L1148.1 175.2 L1147.2 172.2 L1151.8 169.4 L1151.3 167.2 L1150.9 165.0 L1145.7 164.1 L1145.4 160.9 L1150.4 159.2 L1150.4 156.9 L1150.5 154.6 L1145.5 152.7 L1145.9 149.5 L1151.2 148.9 L1151.7 146.7 L1152.3 144.5 L1147.8 141.5 L1148.9 138.5 L1154.2 139.0 L1155.1 136.9 L1156.1 134.9 L1152.3 131.1 L1154.0 128.4 L1159.1 129.9 L1160.4 128.1 L1161.8 126.3 L1159.0 121.8 L1161.1 119.5 L1165.8 122.1 L1167.5 120.5 L1169.2 119.1 L1167.4 114.1 L1170.0 112.3 L1174.0 115.8 L1176.0 114.6 L1178.0 113.6 L1177.2 108.3 L1180.1 107.1 L1183.3 111.3 L1185.5 110.6 L1187.7 110.0 L1188.0 104.7 L1191.1 104.1 L1193.4 108.9 L1195.6 108.7 L1197.9 108.5 L1199.3 103.4 L1202.5 103.5 L1203.7 108.7 L1205.9 108.9 L1208.2 109.2 L1210.6 104.5 L1213.7 105.2 L1213.8 110.5 L1216.0 111.2 L1218.1 112.0 L1221.5 107.9 L1224.4 109.3 L1223.4 114.5 L1225.4 115.6 L1227.3 116.8 L1231.4 113.5 L1234.0 115.4 L1231.9 120.3 L1233.6 121.9 L1235.2 123.5 L1240.0 121.1 L1242.1 123.5 L1239.0 127.8 L1240.3 129.7 L1241.6 131.6 L1246.7 130.2 L1248.3 133.0 L1244.4 136.6 L1245.3 138.7 L1246.2 140.8 L1251.5 140.6 L1252.4 143.6 L1247.8 146.4 L1248.3 148.6 L1248.7 150.8 L1253.9 151.7 L1254.2 154.9 L1249.2 156.6Z" fill="none" stroke="#15150a" stroke-width="1.0" stroke-linejoin="round" />
</g>
<g ><path d="M1242.3 104.0 L1230.6 104.0" stroke="#15150a" stroke-width="11.3" stroke-linecap="round"/><path d="M1242.3 104.0 L1230.6 104.0" stroke="#ffffe1" stroke-width="8.5" stroke-linecap="round"/><path d="M1219.7 103.9 L1207.0 103.9" stroke="#15150a" stroke-width="11.3" stroke-linecap="round"/><path d="M1219.7 103.9 L1207.0 103.9" stroke="#ffffe1" stroke-width="8.5" stroke-linecap="round"/><path d="M1196.1 104.0 L1184.3 106.2" stroke="#15150a" stroke-width="11.3" stroke-linecap="round"/><path d="M1196.1 104.0 L1184.3 106.2" stroke="#ffffe1" stroke-width="8.5" stroke-linecap="round"/><path d="M1174.4 110.4 L1163.5 117.6" stroke="#15150a" stroke-width="11.3" stroke-linecap="round"/><path d="M1174.4 110.4 L1163.5 117.6" stroke="#3d3d3d" stroke-width="8.5" stroke-linecap="round"/><path d="M1155.3 124.9 L1149.0 135.2" stroke="#15150a" stroke-width="11.3" stroke-linecap="round"/><path d="M1155.3 124.9 L1149.0 135.2" stroke="#ffffe1" stroke-width="8.5" stroke-linecap="round"/><path d="M1145.4 146.1 L1143.2 157.9" stroke="#15150a" stroke-width="11.3" stroke-linecap="round"/><path d="M1145.4 146.1 L1143.2 157.9" stroke="#ffffe1" stroke-width="8.5" stroke-linecap="round"/><circle cx="1242.3" cy="104.0" r="2.3" fill="#fffff0" stroke="#15150a" stroke-width="1.25"/><circle cx="1230.6" cy="104.0" r="2.3" fill="#fffff0" stroke="#15150a" stroke-width="1.25"/><circle cx="1219.7" cy="103.9" r="2.3" fill="#fffff0" stroke="#15150a" stroke-width="1.25"/><circle cx="1207.0" cy="103.9" r="2.3" fill="#fffff0" stroke="#15150a" stroke-width="1.25"/><circle cx="1196.1" cy="104.0" r="2.3" fill="#fffff0" stroke="#15150a" stroke-width="1.25"/><circle cx="1184.3" cy="106.2" r="2.3" fill="#fffff0" stroke="#15150a" stroke-width="1.25"/><circle cx="1174.4" cy="110.4" r="2.3" fill="#fffff0" stroke="#15150a" stroke-width="1.25"/><circle cx="1163.5" cy="117.6" r="2.3" fill="#fffff0" stroke="#15150a" stroke-width="1.25"/><circle cx="1155.3" cy="124.9" r="2.3" fill="#fffff0" stroke="#15150a" stroke-width="1.25"/><circle cx="1149.0" cy="135.2" r="2.3" fill="#fffff0" stroke="#15150a" stroke-width="1.25"/><circle cx="1145.4" cy="146.1" r="2.3" fill="#fffff0" stroke="#15150a" stroke-width="1.25"/><circle cx="1143.2" cy="157.9" r="2.3" fill="#fffff0" stroke="#15150a" stroke-width="1.25"/></g>
<circle cx="1176.2" cy="125.3" r="3.2" fill="#000"/>
</g>
<circle cx="1185.8" cy="122.4" r="52.2" fill="none" stroke="#15150a" stroke-width="1.3"/>
<g transform="translate(2529.2,0) scale(-1,1)">
<circle cx="1185.8" cy="122.4" r="52.2" fill="#ffffe1" stroke="none"/>
<g clip-path="url(#c6l)">
<circle cx="1199.8" cy="157.9" r="47.2" fill="none" stroke="#15150a" stroke-width="1.53" />
<circle cx="1199.8" cy="157.9" r="43.2" fill="none" stroke="#15150a" stroke-width="1.06" />
<path d="M1180.8 132.5 L1212.2 128.7 L1231.3 154.1 L1218.8 183.3 L1187.4 187.1 L1168.3 161.7Z" fill="none" stroke="#15150a" stroke-width="1.3" />
<circle cx="1199.8" cy="157.9" r="27.2" fill="none" stroke="#555" stroke-width="0.83" />
<circle cx="1199.8" cy="157.9" r="26.0" fill="none" stroke="#555" stroke-width="0.83" />
<g clip-path="url(#t6)">
<path d="M1249.2 158.9 L1249.1 161.2 L1254.1 163.1 L1253.7 166.3 L1248.4 166.9 L1247.9 169.1 L1247.3 171.3 L1251.8 174.3 L1250.7 177.3 L1245.4 176.8 L1244.5 178.9 L1243.5 180.9 L1247.3 184.7 L1245.6 187.4 L1240.5 185.9 L1239.2 187.7 L1237.8 189.5 L1240.6 194.0 L1238.5 196.3 L1233.8 193.7 L1232.1 195.3 L1230.4 196.7 L1232.2 201.7 L1229.6 203.5 L1225.6 200.0 L1223.6 201.2 L1221.6 202.2 L1222.4 207.5 L1219.5 208.7 L1216.3 204.5 L1214.1 205.2 L1211.9 205.8 L1211.6 211.1 L1208.5 211.7 L1206.2 206.9 L1204.0 207.1 L1201.7 207.3 L1200.3 212.4 L1197.1 212.3 L1195.9 207.1 L1193.7 206.9 L1191.4 206.6 L1189.0 211.3 L1185.9 210.6 L1185.8 205.3 L1183.6 204.6 L1181.5 203.8 L1178.1 207.9 L1175.2 206.5 L1176.2 201.3 L1174.2 200.2 L1172.3 199.0 L1168.2 202.3 L1165.6 200.4 L1167.7 195.5 L1166.0 193.9 L1164.4 192.3 L1159.6 194.7 L1157.5 192.3 L1160.6 188.0 L1159.3 186.1 L1158.0 184.2 L1152.9 185.6 L1151.3 182.8 L1155.2 179.2 L1154.3 177.1 L1153.4 175.0 L1148.1 175.2 L1147.2 172.2 L1151.8 169.4 L1151.3 167.2 L1150.9 165.0 L1145.7 164.1 L1145.4 160.9 L1150.4 159.2 L1150.4 156.9 L1150.5 154.6 L1145.5 152.7 L1145.9 149.5 L1151.2 148.9 L1151.7 146.7 L1152.3 144.5 L1147.8 141.5 L1148.9 138.5 L1154.2 139.0 L1155.1 136.9 L1156.1 134.9 L1152.3 131.1 L1154.0 128.4 L1159.1 129.9 L1160.4 128.1 L1161.8 126.3 L1159.0 121.8 L1161.1 119.5 L1165.8 122.1 L1167.5 120.5 L1169.2 119.1 L1167.4 114.1 L1170.0 112.3 L1174.0 115.8 L1176.0 114.6 L1178.0 113.6 L1177.2 108.3 L1180.1 107.1 L1183.3 111.3 L1185.5 110.6 L1187.7 110.0 L1188.0 104.7 L1191.1 104.1 L1193.4 108.9 L1195.6 108.7 L1197.9 108.5 L1199.3 103.4 L1202.5 103.5 L1203.7 108.7 L1205.9 108.9 L1208.2 109.2 L1210.6 104.5 L1213.7 105.2 L1213.8 110.5 L1216.0 111.2 L1218.1 112.0 L1221.5 107.9 L1224.4 109.3 L1223.4 114.5 L1225.4 115.6 L1227.3 116.8 L1231.4 113.5 L1234.0 115.4 L1231.9 120.3 L1233.6 121.9 L1235.2 123.5 L1240.0 121.1 L1242.1 123.5 L1239.0 127.8 L1240.3 129.7 L1241.6 131.6 L1246.7 130.2 L1248.3 133.0 L1244.4 136.6 L1245.3 138.7 L1246.2 140.8 L1251.5 140.6 L1252.4 143.6 L1247.8 146.4 L1248.3 148.6 L1248.7 150.8 L1253.9 151.7 L1254.2 154.9 L1249.2 156.6Z" fill="none" stroke="#15150a" stroke-width="1.0" stroke-linejoin="round" />
</g>
<g ><path d="M1242.3 104.0 L1230.6 104.0" stroke="#15150a" stroke-width="11.3" stroke-linecap="round"/><path d="M1242.3 104.0 L1230.6 104.0" stroke="#ffffe1" stroke-width="8.5" stroke-linecap="round"/><path d="M1219.7 103.9 L1207.0 103.9" stroke="#15150a" stroke-width="11.3" stroke-linecap="round"/><path d="M1219.7 103.9 L1207.0 103.9" stroke="#ffffe1" stroke-width="8.5" stroke-linecap="round"/><path d="M1196.1 104.0 L1184.3 106.2" stroke="#15150a" stroke-width="11.3" stroke-linecap="round"/><path d="M1196.1 104.0 L1184.3 106.2" stroke="#ffffe1" stroke-width="8.5" stroke-linecap="round"/><path d="M1174.4 110.4 L1163.5 117.6" stroke="#15150a" stroke-width="11.3" stroke-linecap="round"/><path d="M1174.4 110.4 L1163.5 117.6" stroke="#3d3d3d" stroke-width="8.5" stroke-linecap="round"/><path d="M1155.3 124.9 L1149.0 135.2" stroke="#15150a" stroke-width="11.3" stroke-linecap="round"/><path d="M1155.3 124.9 L1149.0 135.2" stroke="#ffffe1" stroke-width="8.5" stroke-linecap="round"/><path d="M1145.4 146.1 L1143.2 157.9" stroke="#15150a" stroke-width="11.3" stroke-linecap="round"/><path d="M1145.4 146.1 L1143.2 157.9" stroke="#ffffe1" stroke-width="8.5" stroke-linecap="round"/><circle cx="1242.3" cy="104.0" r="2.3" fill="#fffff0" stroke="#15150a" stroke-width="1.25"/><circle cx="1230.6" cy="104.0" r="2.3" fill="#fffff0" stroke="#15150a" stroke-width="1.25"/><circle cx="1219.7" cy="103.9" r="2.3" fill="#fffff0" stroke="#15150a" stroke-width="1.25"/><circle cx="1207.0" cy="103.9" r="2.3" fill="#fffff0" stroke="#15150a" stroke-width="1.25"/><circle cx="1196.1" cy="104.0" r="2.3" fill="#fffff0" stroke="#15150a" stroke-width="1.25"/><circle cx="1184.3" cy="106.2" r="2.3" fill="#fffff0" stroke="#15150a" stroke-width="1.25"/><circle cx="1174.4" cy="110.4" r="2.3" fill="#fffff0" stroke="#15150a" stroke-width="1.25"/><circle cx="1163.5" cy="117.6" r="2.3" fill="#fffff0" stroke="#15150a" stroke-width="1.25"/><circle cx="1155.3" cy="124.9" r="2.3" fill="#fffff0" stroke="#15150a" stroke-width="1.25"/><circle cx="1149.0" cy="135.2" r="2.3" fill="#fffff0" stroke="#15150a" stroke-width="1.25"/><circle cx="1145.4" cy="146.1" r="2.3" fill="#fffff0" stroke="#15150a" stroke-width="1.25"/><circle cx="1143.2" cy="157.9" r="2.3" fill="#fffff0" stroke="#15150a" stroke-width="1.25"/></g>
<circle cx="1176.2" cy="125.3" r="3.2" fill="#000"/>
</g>
<circle cx="1185.8" cy="122.4" r="52.2" fill="none" stroke="#15150a" stroke-width="1.3"/>
</g>
<circle cx="1071.6" cy="199.6" r="52.2" fill="#ffffe1"/>
<g clip-path="url(#c4)">
<circle cx="1071.6" cy="230.8" r="49.4" fill="none" stroke="#15150a" stroke-width="1.77" />
<circle cx="1070.3" cy="228.2" r="43.3" fill="none" stroke="#333" stroke-width="0.94" />
<circle cx="1061.5" cy="192.7" r="8.1" fill="#ffffe1" stroke="#15150a" stroke-width="1.18" />
<circle cx="1096.1" cy="202.3" r="8.1" fill="#ffffe1" stroke="#15150a" stroke-width="1.18" />
<circle cx="1035.8" cy="217.6" r="8.1" fill="#ffffe1" stroke="#15150a" stroke-width="1.18" />
<circle cx="1105.8" cy="238.4" r="8.6" fill="#ffffe1" stroke="#15150a" stroke-width="1.18" />
<path d="M1086.3 229.6 L1086.1 230.9 L1089.4 232.6 L1088.8 234.6 L1085.1 234.2 L1084.5 235.4 L1083.9 236.5 L1086.3 239.4 L1084.9 241.0 L1081.7 239.2 L1080.7 240.1 L1079.6 240.9 L1080.7 244.4 L1078.9 245.4 L1076.6 242.5 L1075.3 242.9 L1074.0 243.3 L1073.7 247.0 L1071.6 247.2 L1070.6 243.6 L1069.2 243.5 L1067.9 243.3 L1066.2 246.6 L1064.2 246.0 L1064.6 242.3 L1063.4 241.7 L1062.3 241.1 L1059.4 243.5 L1057.8 242.1 L1059.6 238.9 L1058.7 237.9 L1057.9 236.8 L1054.4 237.9 L1053.4 236.1 L1056.3 233.8 L1055.9 232.5 L1055.5 231.2 L1051.8 230.9 L1051.6 228.8 L1055.2 227.8 L1055.3 226.4 L1055.5 225.1 L1052.2 223.4 L1052.8 221.4 L1056.5 221.8 L1057.1 220.6 L1057.7 219.5 L1055.3 216.6 L1056.7 215.0 L1059.9 216.8 L1060.9 215.9 L1062.0 215.1 L1060.9 211.6 L1062.7 210.6 L1065.0 213.5 L1066.3 213.1 L1067.6 212.7 L1067.9 209.0 L1070.0 208.8 L1071.0 212.4 L1072.4 212.5 L1073.7 212.7 L1075.4 209.4 L1077.4 210.0 L1077.0 213.7 L1078.2 214.3 L1079.3 214.9 L1082.2 212.5 L1083.8 213.9 L1082.0 217.1 L1082.9 218.1 L1083.7 219.2 L1087.2 218.1 L1088.2 219.9 L1085.3 222.2 L1085.7 223.5 L1086.1 224.8 L1089.8 225.1 L1090.0 227.2 L1086.4 228.2Z" fill="#ffffe1" stroke="#15150a" stroke-width="0.9" stroke-linejoin="round" />
<circle cx="1070.8" cy="228.0" r="13.6" fill="none" stroke="#15150a" stroke-width="1.06" />
<circle cx="1070.8" cy="228.0" r="9.0" fill="none" stroke="#15150a" stroke-width="1.06" />
<circle cx="1022.6" cy="202.3" r="4.8" fill="#ffffe1" stroke="#15150a" stroke-width="1"/>
<circle cx="1119.8" cy="205.1" r="4.2" fill="#ffffe1" stroke="#15150a" stroke-width="1"/>
<g ><path d="M1028.8 192.7 L1036.1 185.7" stroke="#15150a" stroke-width="10.9" stroke-linecap="round"/><path d="M1028.8 192.7 L1036.1 185.7" stroke="#ffffe1" stroke-width="8.100000000000001" stroke-linecap="round"/><path d="M1045.6 179.4 L1055.2 175.6" stroke="#15150a" stroke-width="10.9" stroke-linecap="round"/><path d="M1045.6 179.4 L1055.2 175.6" stroke="#ffffe1" stroke-width="8.100000000000001" stroke-linecap="round"/><path d="M1066.6 174.0 L1076.7 174.0" stroke="#15150a" stroke-width="10.9" stroke-linecap="round"/><path d="M1066.6 174.0 L1076.7 174.0" stroke="#3d3d3d" stroke-width="8.100000000000001" stroke-linecap="round"/><path d="M1087.4 176.3 L1097.2 180.2" stroke="#15150a" stroke-width="10.9" stroke-linecap="round"/><path d="M1087.4 176.3 L1097.2 180.2" stroke="#ffffe1" stroke-width="8.100000000000001" stroke-linecap="round"/><path d="M1106.9 187.2 L1114.0 194.5" stroke="#15150a" stroke-width="10.9" stroke-linecap="round"/><path d="M1106.9 187.2 L1114.0 194.5" stroke="#ffffe1" stroke-width="8.100000000000001" stroke-linecap="round"/><circle cx="1028.8" cy="192.7" r="2.0" fill="#fffff0" stroke="#15150a" stroke-width="1.25"/><circle cx="1036.1" cy="185.7" r="2.0" fill="#fffff0" stroke="#15150a" stroke-width="1.25"/><circle cx="1045.6" cy="179.4" r="2.0" fill="#fffff0" stroke="#15150a" stroke-width="1.25"/><circle cx="1055.2" cy="175.6" r="2.0" fill="#fffff0" stroke="#15150a" stroke-width="1.25"/><circle cx="1066.6" cy="174.0" r="2.0" fill="#fffff0" stroke="#15150a" stroke-width="1.25"/><circle cx="1076.7" cy="174.0" r="2.0" fill="#fffff0" stroke="#15150a" stroke-width="1.25"/><circle cx="1087.4" cy="176.3" r="2.0" fill="#fffff0" stroke="#15150a" stroke-width="1.25"/><circle cx="1097.2" cy="180.2" r="2.0" fill="#fffff0" stroke="#15150a" stroke-width="1.25"/><circle cx="1106.9" cy="187.2" r="2.0" fill="#fffff0" stroke="#15150a" stroke-width="1.25"/><circle cx="1114.0" cy="194.5" r="2.0" fill="#fffff0" stroke="#15150a" stroke-width="1.25"/></g>
<circle cx="1022.6" cy="202.3" r="1.7" fill="#fff" stroke="#15150a" stroke-width="1.06" />
<circle cx="1119.8" cy="205.1" r="1.7" fill="#fff" stroke="#15150a" stroke-width="1.06" />
<circle cx="1071.6" cy="184.2" r="2.3" fill="#000"/>
</g>
<circle cx="1071.6" cy="199.6" r="52.2" fill="none" stroke="#15150a" stroke-width="1.53" />
<circle cx="1005.2" cy="429.8" r="52.2" fill="#ffffe1"/>
<g clip-path="url(#c3)">
<circle cx="1005.4" cy="440.5" r="52.4" fill="none" stroke="#15150a" stroke-width="1.18" />
<path d="M962.4 433.5 C963.5 431.7 966.6 426.3 968.7 422.7 C970.7 419.0 972.5 413.3 974.9 411.7 C977.3 410.1 980.4 413.0 983.0 412.8 C985.6 412.7 988.4 412.2 990.4 410.8 C992.5 409.5 993.7 406.9 995.0 404.9 C996.4 402.8 996.2 399.6 998.8 398.4 C1001.3 397.2 1006.5 397.8 1010.4 397.9 C1014.3 398.0 1019.8 397.8 1022.2 399.0 C1024.5 400.2 1023.3 403.0 1024.4 405.1 C1025.6 407.3 1027.0 410.4 1029.0 412.0 C1031.0 413.5 1034.0 414.4 1036.5 414.6 C1039.0 414.7 1042.0 412.3 1044.2 412.8 C1046.4 413.4 1047.9 415.7 1049.6 417.9 C1051.2 420.1 1052.8 423.4 1053.9 426.0 C1055.0 428.6 1055.7 432.2 1056.0 433.5" fill="none" stroke="#15150a" stroke-width="1.18" />
<path d="M962.4 433.5 C963.2 434.1 965.8 435.4 966.8 437.2 C967.8 439.1 968.4 442.2 968.4 444.7 C968.4 447.2 967.7 450.0 966.8 452.2 C965.9 454.3 963.7 456.8 963.1 457.8" fill="none" stroke="#15150a" stroke-width="1.18" />
<path d="M1057.3 433.5 C1056.3 434.5 1052.8 437.4 1051.4 439.7 C1050.0 442.0 1049.1 444.7 1048.9 447.2 C1048.7 449.7 1050.0 453.4 1050.2 454.6" fill="none" stroke="#15150a" stroke-width="1.18" />
<circle cx="1009.5" cy="446.2" r="33.9" fill="none" stroke="#15150a" stroke-width="1.18" />
<circle cx="1009.5" cy="446.2" r="12.4" fill="none" stroke="#15150a" stroke-width="1.18" />
<circle cx="1009.5" cy="446.2" r="7.7" fill="none" stroke="#15150a" stroke-width="1.18" />
<circle cx="988.3" cy="428.3" r="3.1" fill="none" stroke="#15150a" stroke-width="1.18" />
<circle cx="1029.4" cy="428.3" r="3.1" fill="none" stroke="#15150a" stroke-width="1.18" />
<circle cx="1030.3" cy="461.9" r="3.1" fill="none" stroke="#15150a" stroke-width="1.18" />
<circle cx="1019.7" cy="471.1" r="3.1" fill="none" stroke="#15150a" stroke-width="1.18" />
<circle cx="998.5" cy="471.1" r="3.1" fill="none" stroke="#15150a" stroke-width="1.18" />
<circle cx="987.3" cy="406.1" r="4.0" fill="none" stroke="#15150a" stroke-width="1.18" />
<circle cx="1004.4" cy="403.0" r="4.0" fill="none" stroke="#15150a" stroke-width="1.18" />
<circle cx="1032.1" cy="407.6" r="4.0" fill="none" stroke="#15150a" stroke-width="1.18" />
<circle cx="1041.5" cy="421.3" r="4.0" fill="none" stroke="#15150a" stroke-width="1.18" />
<circle cx="969.7" cy="429.1" r="4.0" fill="none" stroke="#15150a" stroke-width="1.18" />
<circle cx="964.3" cy="445.3" r="4.0" fill="none" stroke="#15150a" stroke-width="1.18" />
<circle cx="1052.3" cy="447.8" r="4.0" fill="none" stroke="#15150a" stroke-width="1.18" />
<circle cx="985.5" cy="446.2" r="8.7" fill="none" stroke="#15150a" stroke-width="1.3" stroke-dasharray="3.5 2.5"/>
<ellipse cx="985.5" cy="446.8" rx="3.4" ry="2.6" fill="#000"/>
</g>
<circle cx="1005.2" cy="429.8" r="52.2" fill="none" stroke="#15150a" stroke-width="1.53" />
<circle cx="1012.4" cy="584.3" r="52.2" fill="#ffffe1"/>
<g clip-path="url(#c7)">
<circle cx="1012.5" cy="583.0" r="42.7" fill="none" stroke="#15150a" stroke-width="1.18" />
<circle cx="1012.5" cy="530.5" r="9.5" fill="none" stroke="#15150a" stroke-width="1.06" />
<circle cx="1012.5" cy="635.5" r="9.5" fill="none" stroke="#15150a" stroke-width="1.06" />
<circle cx="967.1" cy="556.7" r="9.5" fill="none" stroke="#15150a" stroke-width="1.06" />
<circle cx="1058.0" cy="556.7" r="9.5" fill="none" stroke="#15150a" stroke-width="1.06" />
<circle cx="967.1" cy="609.2" r="9.5" fill="none" stroke="#15150a" stroke-width="1.06" />
<circle cx="1058.0" cy="609.2" r="9.5" fill="none" stroke="#15150a" stroke-width="1.06" />
<g clip-path="url(#c7t)">
<path d="M1040.5 584.4 L1040.3 586.3 L1045.1 588.3 L1044.5 591.2 L1039.3 591.1 L1038.7 593.0 L1038.0 594.7 L1041.9 598.1 L1040.4 600.7 L1035.5 599.0 L1034.3 600.6 L1033.1 602.0 L1035.7 606.5 L1033.6 608.4 L1029.4 605.3 L1027.8 606.4 L1026.2 607.4 L1027.3 612.5 L1024.7 613.7 L1021.7 609.4 L1019.9 610.0 L1018.0 610.5 L1017.5 615.6 L1014.6 615.9 L1013.1 611.0 L1011.1 610.9 L1009.2 610.8 L1007.2 615.5 L1004.3 614.9 L1004.4 609.8 L1002.6 609.1 L1000.8 608.4 L997.4 612.3 L994.9 610.9 L996.5 605.9 L995.0 604.8 L993.5 603.5 L989.1 606.2 L987.1 604.0 L990.2 599.9 L989.1 598.3 L988.1 596.6 L983.1 597.8 L981.9 595.1 L986.1 592.1 L985.5 590.3 L985.1 588.4 L979.9 588.0 L979.6 585.1 L984.5 583.5 L984.6 581.6 L984.7 579.7 L980.0 577.6 L980.6 574.8 L985.8 574.8 L986.4 573.0 L987.1 571.2 L983.2 567.8 L984.7 565.3 L989.6 567.0 L990.7 565.4 L992.0 564.0 L989.3 559.5 L991.5 557.6 L995.7 560.7 L997.2 559.5 L998.9 558.5 L997.7 553.5 L1000.4 552.3 L1003.4 556.5 L1005.2 556.0 L1007.1 555.5 L1007.6 550.4 L1010.5 550.1 L1012.0 555.0 L1013.9 555.0 L1015.9 555.2 L1017.9 550.4 L1020.7 551.0 L1020.7 556.2 L1022.5 556.8 L1024.3 557.6 L1027.7 553.7 L1030.2 555.1 L1028.6 560.0 L1030.1 561.2 L1031.6 562.4 L1036.0 559.8 L1038.0 561.9 L1034.9 566.1 L1036.0 567.7 L1037.0 569.3 L1042.0 568.2 L1043.2 570.8 L1039.0 573.8 L1039.6 575.7 L1040.0 577.6 L1045.2 578.0 L1045.5 580.9 L1040.5 582.4Z" fill="none" stroke="#15150a" stroke-width="0.9" stroke-linejoin="round" />
</g>
<circle cx="1012.5" cy="583.0" r="21.3" fill="#ffffe1" stroke="#15150a" stroke-width="1.18" />
<circle cx="1012.5" cy="583.0" r="15.6" fill="none" stroke="#15150a" stroke-width="1.18" />
<circle cx="1012.5" cy="583.0" r="11.0" fill="none" stroke="#15150a" stroke-width="1.18" />
<path d="M1012.5 575.0 L1014.7 579.2 L1019.5 579.0 L1016.9 583.0 L1019.5 587.0 L1014.7 586.8 L1012.5 591.0 L1010.3 586.8 L1005.6 587.0 L1008.1 583.0 L1005.6 579.0 L1010.3 579.2Z" fill="none" stroke="#15150a" stroke-width="1.06" />
<g ><path d="M1030.3 537.3 L1020.5 542.6" stroke="#15150a" stroke-width="11" stroke-linecap="round"/><path d="M1030.3 537.3 L1020.5 542.6" stroke="#ffffe1" stroke-width="8.2" stroke-linecap="round"/><path d="M1010.8 547.8 L1000.1 553.7" stroke="#15150a" stroke-width="11" stroke-linecap="round"/><path d="M1010.8 547.8 L1000.1 553.7" stroke="#ffffe1" stroke-width="8.2" stroke-linecap="round"/><path d="M991.6 559.9 L983.7 569.7" stroke="#15150a" stroke-width="11" stroke-linecap="round"/><path d="M991.6 559.9 L983.7 569.7" stroke="#ffffe1" stroke-width="8.2" stroke-linecap="round"/><path d="M980.5 580.9 L982.0 592.8" stroke="#15150a" stroke-width="11" stroke-linecap="round"/><path d="M980.5 580.9 L982.0 592.8" stroke="#ffffe1" stroke-width="8.2" stroke-linecap="round"/><path d="M987.1 602.9 L996.0 612.0" stroke="#15150a" stroke-width="11" stroke-linecap="round"/><path d="M987.1 602.9 L996.0 612.0" stroke="#ffffe1" stroke-width="8.2" stroke-linecap="round"/><path d="M1006.0 615.5 L1017.9 615.5" stroke="#15150a" stroke-width="11" stroke-linecap="round"/><path d="M1006.0 615.5 L1017.9 615.5" stroke="#3d3d3d" stroke-width="8.2" stroke-linecap="round"/><path d="M1028.5 612.3 L1038.3 604.0" stroke="#15150a" stroke-width="11" stroke-linecap="round"/><path d="M1028.5 612.3 L1038.3 604.0" stroke="#ffffe1" stroke-width="8.2" stroke-linecap="round"/><path d="M1045.1 594.9 L1051.6 584.8" stroke="#15150a" stroke-width="11" stroke-linecap="round"/><path d="M1045.1 594.9 L1051.6 584.8" stroke="#ffffe1" stroke-width="8.2" stroke-linecap="round"/><path d="M1057.5 575.9 L1063.2 566.1" stroke="#15150a" stroke-width="11" stroke-linecap="round"/><path d="M1057.5 575.9 L1063.2 566.1" stroke="#ffffe1" stroke-width="8.2" stroke-linecap="round"/><circle cx="1030.3" cy="537.3" r="2.0" fill="#fffff0" stroke="#15150a" stroke-width="1.25"/><circle cx="1020.5" cy="542.6" r="2.0" fill="#fffff0" stroke="#15150a" stroke-width="1.25"/><circle cx="1010.8" cy="547.8" r="2.0" fill="#fffff0" stroke="#15150a" stroke-width="1.25"/><circle cx="1000.1" cy="553.7" r="2.0" fill="#fffff0" stroke="#15150a" stroke-width="1.25"/><circle cx="991.6" cy="559.9" r="2.0" fill="#fffff0" stroke="#15150a" stroke-width="1.25"/><circle cx="983.7" cy="569.7" r="2.0" fill="#fffff0" stroke="#15150a" stroke-width="1.25"/><circle cx="980.5" cy="580.9" r="2.0" fill="#fffff0" stroke="#15150a" stroke-width="1.25"/><circle cx="982.0" cy="592.8" r="2.0" fill="#fffff0" stroke="#15150a" stroke-width="1.25"/><circle cx="987.1" cy="602.9" r="2.0" fill="#fffff0" stroke="#15150a" stroke-width="1.25"/><circle cx="996.0" cy="612.0" r="2.0" fill="#fffff0" stroke="#15150a" stroke-width="1.25"/><circle cx="1006.0" cy="615.5" r="2.0" fill="#fffff0" stroke="#15150a" stroke-width="1.25"/><circle cx="1017.9" cy="615.5" r="2.0" fill="#fffff0" stroke="#15150a" stroke-width="1.25"/><circle cx="1028.5" cy="612.3" r="2.0" fill="#fffff0" stroke="#15150a" stroke-width="1.25"/><circle cx="1038.3" cy="604.0" r="2.0" fill="#fffff0" stroke="#15150a" stroke-width="1.25"/><circle cx="1045.1" cy="594.9" r="2.0" fill="#fffff0" stroke="#15150a" stroke-width="1.25"/><circle cx="1051.6" cy="584.8" r="2.0" fill="#fffff0" stroke="#15150a" stroke-width="1.25"/><circle cx="1057.5" cy="575.9" r="2.0" fill="#fffff0" stroke="#15150a" stroke-width="1.25"/><circle cx="1063.2" cy="566.1" r="2.0" fill="#fffff0" stroke="#15150a" stroke-width="1.25"/></g>
<rect x="1010.9" y="604.8" width="2.6" height="2.6" fill="#000"/>
</g>
<circle cx="1012.4" cy="584.3" r="52.2" fill="none" stroke="#15150a" stroke-width="1.53" />
<circle cx="1380.6" cy="719.3" r="52.2" fill="#ffffe1"/>
<g clip-path="url(#c5)">
<circle cx="1363.4" cy="713.7" r="36.8" fill="none" stroke="#15150a" stroke-width="1.06" />
<circle cx="1364.4" cy="709.7" r="36.5" fill="none" stroke="#15150a" stroke-width="1.06" />
<circle cx="1363.4" cy="711.7" r="33.9" fill="#ffffe1" stroke="#15150a" stroke-width="1.42" />
<circle cx="1363.4" cy="711.7" r="31.0" fill="none" stroke="#15150a" stroke-width="1.18" />
<path d="M1394.5 726.0 L1401.9 730.1" stroke="#000" stroke-width="3.4"/>
<g ><path d="M1391.4 673.2 L1401.9 682.4" stroke="#15150a" stroke-width="14" stroke-linecap="round"/><path d="M1391.4 673.2 L1401.9 682.4" stroke="#ffffe1" stroke-width="11.2" stroke-linecap="round"/><path d="M1408.9 696.1 L1411.4 709.9" stroke="#15150a" stroke-width="14" stroke-linecap="round"/><path d="M1408.9 696.1 L1411.4 709.9" stroke="#ffffe1" stroke-width="11.2" stroke-linecap="round"/><path d="M1409.6 725.5 L1403.7 738.3" stroke="#15150a" stroke-width="14" stroke-linecap="round"/><path d="M1409.6 725.5 L1403.7 738.3" stroke="#3d3d3d" stroke-width="11.2" stroke-linecap="round"/><path d="M1393.3 749.9 L1381.7 756.6" stroke="#15150a" stroke-width="14" stroke-linecap="round"/><path d="M1393.3 749.9 L1381.7 756.6" stroke="#ffffe1" stroke-width="11.2" stroke-linecap="round"/><path d="M1366.1 760.3 L1352.4 759.8" stroke="#15150a" stroke-width="14" stroke-linecap="round"/><path d="M1366.1 760.3 L1352.4 759.8" stroke="#ffffe1" stroke-width="11.2" stroke-linecap="round"/><circle cx="1391.4" cy="673.2" r="2.7" fill="#fffff0" stroke="#15150a" stroke-width="1.25"/><circle cx="1401.9" cy="682.4" r="2.7" fill="#fffff0" stroke="#15150a" stroke-width="1.25"/><circle cx="1408.9" cy="696.1" r="2.7" fill="#fffff0" stroke="#15150a" stroke-width="1.25"/><circle cx="1411.4" cy="709.9" r="2.7" fill="#fffff0" stroke="#15150a" stroke-width="1.25"/><circle cx="1409.6" cy="725.5" r="2.7" fill="#fffff0" stroke="#15150a" stroke-width="1.25"/><circle cx="1403.7" cy="738.3" r="2.7" fill="#fffff0" stroke="#15150a" stroke-width="1.25"/><circle cx="1393.3" cy="749.9" r="2.7" fill="#fffff0" stroke="#15150a" stroke-width="1.25"/><circle cx="1381.7" cy="756.6" r="2.7" fill="#fffff0" stroke="#15150a" stroke-width="1.25"/><circle cx="1366.1" cy="760.3" r="2.7" fill="#fffff0" stroke="#15150a" stroke-width="1.25"/><circle cx="1352.4" cy="759.8" r="2.7" fill="#fffff0" stroke="#15150a" stroke-width="1.25"/></g>
</g>
<circle cx="1380.6" cy="719.3" r="52.2" fill="none" stroke="#15150a" stroke-width="1.53" />
<ellipse cx="1150.7" cy="737" rx="8.6" ry="13" fill="#ffffe1" stroke="#15150a" stroke-width="1"/>
<ellipse cx="1149.5" cy="737" rx="7" ry="11.2" fill="none" stroke="#15150a" stroke-width="0.8"/>
<path d="M1143.1 733.7 L1146.0 730.7 L1152.4 731.0 L1154.0 734.3 L1154.0 740.3 L1151.6 743.0 L1145.3 742.7 L1143.1 739.7Z" fill="none" stroke="#15150a" stroke-width="1.06" />
<path d="M1148.7 731.0 L1149.3 742.7" fill="none" stroke="#15150a" stroke-width="0.83" />
<path d="M1159.6 733.1 L1182.0 733.1 M1159.6 741.3 L1182.0 741.3" fill="none" stroke="#15150a" stroke-width="1.06" />
<path d="M1182.0 733.1 Q1184.0 737.2 1182.0 741.3" fill="none" stroke="#15150a" stroke-width="1.06" />
<path d="M1168.7 733.4 L1167.9 741.1" fill="none" stroke="#15150a" stroke-width="0.83" />
<path d="M1170.3 733.4 L1169.5 741.1" fill="none" stroke="#15150a" stroke-width="0.83" />
<path d="M1171.9 733.4 L1171.1 741.1" fill="none" stroke="#15150a" stroke-width="0.83" />
<path d="M1173.5 733.4 L1172.7 741.1" fill="none" stroke="#15150a" stroke-width="0.83" />
<path d="M1175.1 733.4 L1174.3 741.1" fill="none" stroke="#15150a" stroke-width="0.83" />
<path d="M1176.7 733.4 L1175.9 741.1" fill="none" stroke="#15150a" stroke-width="0.83" />
<path d="M1178.3 733.4 L1177.5 741.1" fill="none" stroke="#15150a" stroke-width="0.83" />
<path d="M1179.9 733.4 L1179.1 741.1" fill="none" stroke="#15150a" stroke-width="0.83" />
<path d="M1181.5 733.4 L1180.7 741.1" fill="none" stroke="#15150a" stroke-width="0.83" />
<ellipse cx="1240.5" cy="735.7" rx="20.5" ry="44.8" fill="#ffffe1" stroke="#15150a" stroke-width="1.2"/>
<ellipse cx="1234" cy="735.7" rx="20" ry="44.8" fill="#ffffe1" stroke="#15150a" stroke-width="1.15"/>
<path d="M1234 690.9 H1241 M1234 780.5 H1241" stroke="#15150a" stroke-width="1.2"/>
<ellipse cx="1226" cy="735.7" rx="19" ry="44.6" fill="#ffffe1" stroke="#15150a" stroke-width="1.15"/>
<path d="M1222 691.2 H1234 M1222 780.2 H1234" stroke="#15150a" stroke-width="1.2"/>
<ellipse cx="1221" cy="736" rx="18" ry="40" fill="#ffffe1" stroke="#15150a" stroke-width="1.15"/>
<ellipse cx="1216" cy="736" rx="17.5" ry="38.6" fill="#ffffe1" stroke="#15150a" stroke-width="1.15"/>
<ellipse cx="1210.7" cy="736.3" rx="16.8" ry="38" fill="#ffffe1" stroke="#15150a" stroke-width="1.3"/>
<ellipse cx="1212" cy="736.3" rx="12.8" ry="29" fill="none" stroke="#15150a" stroke-width="0.8"/>
<ellipse cx="1219" cy="735.5" rx="4.6" ry="8.6" fill="none" stroke="#15150a" stroke-width="1.15"/>
<ellipse cx="1219" cy="735.5" rx="3.4" ry="7" fill="none" stroke="#15150a" stroke-width="0.7"/>
<path d="M1206.0 717.7 L1216.0 725.0 L1220.0 715.0 M1208.0 716.3 L1215.3 722.3" fill="none" stroke="#15150a" stroke-width="1.06" />
<path d="M1202.0 734.3 C1203.1 734.9 1207.3 736.0 1208.7 737.7 C1210.0 739.3 1210.4 741.9 1210.0 744.3 C1209.6 746.8 1206.7 751.0 1206.0 752.3" fill="none" stroke="#15150a" stroke-width="1.06" />
<path d="M1214.0 761.7 L1220.0 749.7 L1224.7 751.0 L1218.7 762.3 M1216.7 761.7 L1221.3 751.7" fill="none" stroke="#15150a" stroke-width="1.06" /></svg></div>
<div id="botbar" class="abs"><div class="abs" style="left:614px;top:1px;width:62px;height:59px;background:#f0f0f0;border-left:1px solid #fff;border-top:1px solid #fff;border-right:2px solid #888;border-bottom:2px solid #888"></div>
<div class="abs b" style="left:614px;top:44px;width:61px;text-align:center;font-size:13px;line-height:16px;color:#000">F1</div>
<div class="abs" style="left:676px;top:1px;width:62px;height:59px;background:#f0f0f0;border-left:1px solid #fff;border-top:1px solid #fff;border-right:2px solid #888;border-bottom:2px solid #888"></div>
<div class="abs b" style="left:676px;top:44px;width:61px;text-align:center;font-size:13px;line-height:16px;color:#000">F2</div>
<div class="abs" style="left:738px;top:1px;width:62px;height:59px;background:#f0f0f0;border-left:1px solid #fff;border-top:1px solid #fff;border-right:2px solid #888;border-bottom:2px solid #888"></div>
<div class="abs b" style="left:738px;top:44px;width:61px;text-align:center;font-size:13px;line-height:16px;color:#a8a8a8;text-shadow:1px 1px 0 #fff">F5</div>
<div class="abs" style="left:800px;top:1px;width:62px;height:59px;background:#f0f0f0;border-left:1px solid #fff;border-top:1px solid #fff;border-right:2px solid #888;border-bottom:2px solid #888"></div>
<div class="abs b" style="left:800px;top:44px;width:61px;text-align:center;font-size:13px;line-height:16px;color:#000">F7</div>
<div class="abs" style="left:862px;top:1px;width:62px;height:59px;background:#f0f0f0;border-left:1px solid #fff;border-top:1px solid #fff;border-right:2px solid #888;border-bottom:2px solid #888"></div>
<div class="abs b" style="left:862px;top:44px;width:61px;text-align:center;font-size:13px;line-height:16px;color:#000">F8</div>
<div class="abs" style="left:924px;top:1px;width:62px;height:59px;background:#f0f0f0;border-left:1px solid #fff;border-top:1px solid #fff;border-right:2px solid #888;border-bottom:2px solid #888"></div>
<div class="abs b" style="left:924px;top:44px;width:61px;text-align:center;font-size:13px;line-height:16px;color:#000">Ctrl+F4</div><svg class="abs" style="left:614px;top:0" width="372" height="61" viewBox="0 0 372 61">
<defs><linearGradient id="qg" x1="0" y1="0" x2="0" y2="1"><stop offset="0" stop-color="#20c8d8"/><stop offset="1" stop-color="#0890a8"/></linearGradient></defs>
<!-- F1 question mark -->
<text x="33.5" y="38" font-size="44" font-weight="bold" text-anchor="middle" fill="#3858a8" font-family="Liberation Sans, sans-serif">?</text>
<text x="31.5" y="36" font-size="44" font-weight="bold" text-anchor="middle" fill="url(#qg)" font-family="Liberation Sans, sans-serif">?</text>
<!-- F2 printer -->
<g transform="translate(62,0)">
<path d="M18 28 L30 34 L46 25 L46 19 L34 14 L18 22Z" fill="#a8a8a8"/>
<path d="M16 20 L30 27 L44 18 L32 12Z" fill="#f4f4f4" stroke="#888" stroke-width="0.6"/>
<path d="M16 20 V28 L30 35 V27Z" fill="#e0e0e0" stroke="#888" stroke-width="0.6"/>
<path d="M30 27 V35 L44 26 V18Z" fill="#b8b8b8" stroke="#808080" stroke-width="0.6"/>
<path d="M27 18 L33 6 L42 9 L37 21Z" fill="#fff" stroke="#999" stroke-width="0.6"/>
<path d="M31 11 l7 2.4 M30 13.5 l7 2.4 M29 16 l7 2.4" stroke="#2030d0" stroke-width="1" stroke-dasharray="1.5 1"/>
<path d="M18 30 L31 37 L47 27" stroke="#707070" stroke-width="1.4" fill="none"/>
<circle cx="23" cy="20.5" r="0.8" fill="#20a020"/>
</g>
<!-- F5 book disabled -->
<g transform="translate(124,0)">
<path d="M13 21 L29 12 L30 14 L44 8 L48 24 L34 32 L32 30 L21 35Z" fill="#b0b0b0"/>
<path d="M15 22 L28 15 L32 29 L21 34Z M31 15 L43 10 L46 23 L34 30Z" fill="#bcbcbc"/>
<path d="M19 23 l8 -4 M20 26 l8 -4 M21 29 l8 -4 M34 17 l8 -3.5 M35 20 l8 -3.5 M36 23 l8 -3.5" stroke="#d8d8d8" stroke-width="1"/>
</g>
<!-- F7 clock + magnifier -->
<g transform="translate(172,-0.5)">
<path d="M48 23 L64 31.5" stroke="#909090" stroke-width="3.4" stroke-linecap="round"/>
<circle cx="40" cy="18" r="9.2" fill="#fff" stroke="#000" stroke-width="1.1"/>
<path d="M40 4.5 V9 M26 18 H31 M49 18 H62" stroke="#000" stroke-width="1.1"/>
<path d="M40 10.5 V19.5" stroke="#000" stroke-width="3"/><path d="M32.5 18.5 H46.5" stroke="#000" stroke-width="2.6"/>
<path d="M35 19 L44 26.500" stroke="#000" stroke-width="1.6"/><path d="M43 26 L55 39" stroke="#000" stroke-width="0.9"/>
<path d="M48 21.5 L61.5 28.5" stroke="#000" stroke-width="2.8" stroke-linecap="round"/>
<path d="M47.3 20.800 l2.200 1.300" stroke="#e8d820" stroke-width="2.2"/>
</g>
<!-- F8 belt -->
<g transform="translate(248,0)">
<rect x="11" y="3.5" width="40" height="39" fill="#fff"/>
<path d="M13 16 Q12 8 20 8 Q24 8 27 11 L47 27 Q51 32 48 37 Q44 41 38 38 L32 28 Q29 24 26 28 L24 34 Q20 39 15 36 Q12 33 13 28Z" fill="none" stroke="#181818" stroke-width="1.6"/>
<circle cx="19" cy="14" r="4" fill="#f4f4f4" stroke="#999" stroke-width="0.6"/><circle cx="17.5" cy="31" r="3" fill="#f0f0f0" stroke="#999" stroke-width="0.6"/><circle cx="28" cy="28.5" r="2.8" fill="#f0f0f0" stroke="#999" stroke-width="0.6"/><circle cx="42" cy="31.5" r="4.6" fill="#f0f0f0" stroke="#999" stroke-width="0.6"/>
</g>
<!-- Ctrl+F4 -->
<g transform="translate(310,0)">
<rect x="27.500" y="10" width="21.500" height="28" fill="#909090"/>
<rect x="24" y="6.500" width="21.500" height="28.500" fill="#f8f8f8" stroke="#707070" stroke-width="0.900"/>
<path d="M30 11 h12 M28 15 h14 M28 19.500 h14 M28 24 h14 M28 28 h14" stroke="#808080" stroke-width="0.900"/><path d="M28 30.500 h13" stroke="#606060" stroke-width="1.600"/>
<path d="M14.500 26.500 L17 30 L24 24Z" fill="#808080"/>
<path d="M13.500 20 L22.500 13.500 L25.500 19.500 L14 27.500Z" fill="#f4f000" stroke="#b0b020" stroke-width="0.400"/>
<path d="M22.500 13.500 L30 10.500 L25.500 19.500Z" fill="#e8e8e0" stroke="#707070" stroke-width="0.500"/><path d="M28.300 11.200 L30 10.500 L29 12.400Z" fill="#000"/>
</g>
</svg></div>
<div id="taskbar" class="abs">
<div class="abs" style="left:114px;top:2px;width:58px;height:38px;background:#7b6c4c;border:1px solid #a39778"></div>
<div class="abs" style="left:176px;top:2px;width:58px;height:38px;background:#7b6c4c;border:1px solid #a39778"></div>
<div class="abs" style="left:237px;top:2px;width:59px;height:38px;background:#a39c88;border:1px solid #e8e4d8"></div>
<svg class="abs" style="left:0;top:0" width="300" height="41" viewBox="0 0 300 41">
<defs><clipPath id="cpb"><circle cx="266.3" cy="20.5" r="15.5"/></clipPath>
<linearGradient id="fg" x1="0" y1="0" x2="0" y2="1"><stop offset="0" stop-color="#fbe9a0"/><stop offset="1" stop-color="#e8c860"/></linearGradient>
<linearGradient id="vg" x1="0" y1="0" x2="1" y2="0"><stop offset="0" stop-color="#f8a020"/><stop offset="0.5" stop-color="#ff8800"/><stop offset="1" stop-color="#e06800"/></linearGradient></defs>
<!-- windows logo -->
<path d="M10.5 10.6 L22 8.9 V19.6 H10.5Z M23.3 8.7 L37.5 6.6 V19.6 H23.3Z M10.5 20.9 H22 V31.6 L10.5 29.9Z M23.3 20.9 H37.5 V33.9 L23.3 31.8Z" fill="#fff"/>
<!-- folder -->
<path d="M66 12 Q66 9 69 9 H77 L79 11.5 H94 Q97 11.5 97 14.5 V31 H66Z" fill="#e8c95c"/>
<rect x="67" y="14.5" width="29.5" height="18" rx="1.5" fill="url(#fg)"/>
<rect x="69" y="9.5" width="4" height="2" fill="#30a040"/><rect x="76.5" y="11" width="4" height="2" fill="#d04030"/><rect x="84" y="12" width="4" height="2" fill="#3070d0"/>
<path d="M71 26 Q71 22 75 22 H89 Q93 22 93 26 V36 H86 V30.5 H78 V36 H71Z" fill="#58b0e0" stroke="#c0e4f8" stroke-width="1"/>
<path d="M74 24 l-4 3 M72 22 l1 6" stroke="#fff" stroke-width="0.8"/>
<!-- chrome -->
<circle cx="142.5" cy="20.5" r="15" fill="#dd4b3e"/>
<path d="M142.5 20.5 L129.5 13 A15 15 0 0 0 136 34 Z" fill="#1ea362"/>
<path d="M129.5 13 A15 15 0 0 0 137 34.4 L145.5 20.5Z" fill="#1ea362"/>
<path d="M142.5 20.5 L157.2 17 A15 15 0 0 1 136.5 34.2 Z" fill="#fed14b"/>
<path d="M142.5 13.5 H155.8 A15 15 0 0 1 137 34.4 L146 24Z" fill="#fed14b"/>
<path d="M129.5 13 A15 15 0 0 1 155.8 13.5 H142.5 L136.4 24Z" fill="#dd4b3e"/>
<circle cx="142.5" cy="20.5" r="7" fill="#fff"/><circle cx="142.5" cy="20.5" r="5.6" fill="#4a8af4"/>
<!-- vlc -->
<path d="M192.5 32 L195 28 H215 L217.5 32 Q218 35 215 35 H195 Q192 35 192.500 32Z" fill="#f08810"/>
<path d="M203.4 7 Q205 5.5 206.600 7 L213.500 30 Q205 33.500 196.500 30Z" fill="url(#vg)"/>
<path d="M201.300 14 Q205 15.200 208.700 14 L210.300 19.500 Q205 21.300 199.700 19.500Z M198.400 24 Q205 26.400 211.600 24 L212.900 28.200 Q205 31 197.100 28.200Z" fill="#f4f0ec"/>
<!-- app disc -->
<g clip-path="url(#cpb)"><rect x="250" y="4" width="34" height="34" fill="#283050"/><path d="M250 4 H262 L258 24 L254 40 H250Z" fill="#c02830"/><path d="M252 26 L276 17 L282 20 V25 L256 36Z" fill="#8890a0"/><path d="M254 30 L262 36 H254Z" fill="#c83038"/><rect x="272" y="14" width="8" height="2" fill="#e04040"/><path d="M262 10 h10" stroke="#8090c0" stroke-width="1"/><circle cx="266.5" cy="20" r="1.800" fill="#e8e0d0"/></g>
</svg>
<svg class="abs" style="left:1400px;top:0" width="200" height="41" viewBox="0 0 200 41">
<path d="M7 25 L11 20.500 L15 25Z" fill="#fff"/>
<!-- flag -->
<path d="M28.500 14.500 V30" stroke="#fff" stroke-width="1.500"/><path d="M30 15.500 Q34 14 36 16 Q39 18.500 42.500 17 Q41 22 36.500 22.500 Q33 21 30 23.500Z" fill="#fff"/>
<!-- power -->
<path d="M53 14.500 V18 M57 14.500 V18" stroke="#fff" stroke-width="1.300"/><path d="M52 18 H58 V22 Q58 24 56 24 V30 H54 V24 Q52 24 52 22Z" fill="#fff"/>
<rect x="60.500" y="16.500" width="6" height="13" fill="#8a8470" stroke="#b8b4a0" stroke-width="1"/><rect x="62" y="14.500" width="3" height="2" fill="#b8b4a0"/>
<path d="M60 24 L67 30.500 M67 24 L60 30.500" stroke="#e02020" stroke-width="1.800"/>
<!-- network -->
<rect x="76" y="14.500" width="4.500" height="8" rx="2" fill="none" stroke="#fff" stroke-width="1.300"/><path d="M78.200 22.500 V26 H81" stroke="#fff" stroke-width="1.200" fill="none"/><circle cx="78.200" cy="17.500" r="0.800" fill="#fff"/>
<rect x="81.500" y="17" width="8.500" height="8.500" fill="none" stroke="#fff" stroke-width="1.300"/><path d="M85.700 25.500 V28 M82 28.500 H89.500" stroke="#fff" stroke-width="1.400"/>
<!-- volume -->
<path d="M99.500 19 H102 L106 14.500 V30 L102 25.500 H99.500Z" fill="#fff"/>
<path d="M108 19.500 Q110 22.200 108 25 M110.500 17.500 Q113.500 22.200 110.500 27 M113 15.500 Q117 22.200 113 29" stroke="#fff" stroke-width="1.100" fill="none" opacity="0.9"/>
</svg>
<div class="abs" style="left:1518px;top:6px;width:80px;text-align:center;color:#fff;font-size:11.500px;line-height:14px;letter-spacing:-0.300px">16:40</div>
<div class="abs" style="left:1518px;top:23px;width:80px;text-align:center;color:#fff;font-size:11.500px;line-height:14px;letter-spacing:-0.300px">21.01.2019</div>
</div>
<svg class="abs" style="left:965px;top:0" width="551" height="25" viewBox="0 0 551 25"><defs>
<linearGradient id="gsky" x1="0" y1="0" x2="0" y2="1"><stop offset="0" stop-color="#18a4e8"/><stop offset="1" stop-color="#ffffff"/></linearGradient>
<linearGradient id="gor" x1="0" y1="0" x2="0" y2="1"><stop offset="0" stop-color="#f86020"/><stop offset="1" stop-color="#ffe000"/></linearGradient>
<linearGradient id="gbl" x1="0" y1="0" x2="0" y2="1"><stop offset="0" stop-color="#2858b8"/><stop offset="1" stop-color="#e8e8fa"/></linearGradient>
<linearGradient id="ggr" x1="0" y1="0" x2="0" y2="1"><stop offset="0" stop-color="#08a050"/><stop offset="1" stop-color="#e8faf0"/></linearGradient>
<linearGradient id="gye" x1="0" y1="0" x2="0" y2="1"><stop offset="0" stop-color="#ffe010"/><stop offset="1" stop-color="#fff8b0"/></linearGradient>
<linearGradient id="ggy" x1="0" y1="0" x2="1" y2="0"><stop offset="0" stop-color="#e8e8e8"/><stop offset="1" stop-color="#505050"/></linearGradient>
</defs><rect x="0" y="0" width="25" height="24.4" fill="#696969"/><rect x="0" y="0" width="24" height="23.4" fill="#a0a0a0"/><rect x="0" y="0" width="23" height="22.6" fill="#fff"/><rect x="1" y="1" width="22" height="21.6" fill="#f0f0f0"/><rect x="25" y="0" width="25" height="24.4" fill="#696969"/><rect x="25" y="0" width="24" height="23.4" fill="#a0a0a0"/><rect x="25" y="0" width="23" height="22.6" fill="#fff"/><rect x="26" y="1" width="22" height="21.6" fill="#f0f0f0"/><rect x="50" y="0" width="25" height="24.4" fill="#696969"/><rect x="50" y="0" width="24" height="23.4" fill="#a0a0a0"/><rect x="50" y="0" width="23" height="22.6" fill="#fff"/><rect x="51" y="1" width="22" height="21.6" fill="#f0f0f0"/><rect x="75" y="0" width="25" height="24.4" fill="#696969"/><rect x="75" y="0" width="24" height="23.4" fill="#a0a0a0"/><rect x="75" y="0" width="23" height="22.6" fill="#fff"/><rect x="76" y="1" width="22" height="21.6" fill="#f0f0f0"/><rect x="100" y="0" width="25" height="24.4" fill="#696969"/><rect x="102" y="2" width="22" height="21.4" fill="#fff"/><rect x="125" y="0" width="25" height="24.4" fill="#696969"/><rect x="125" y="0" width="24" height="23.4" fill="#a0a0a0"/><rect x="125" y="0" width="23" height="22.6" fill="#fff"/><rect x="126" y="1" width="22" height="21.6" fill="#f0f0f0"/><rect x="150" y="0" width="25" height="24.4" fill="#696969"/><rect x="150" y="0" width="24" height="23.4" fill="#a0a0a0"/><rect x="150" y="0" width="23" height="22.6" fill="#fff"/><rect x="151" y="1" width="22" height="21.6" fill="#f0f0f0"/><rect x="175" y="0" width="25" height="24.4" fill="#696969"/><rect x="175" y="0" width="24" height="23.4" fill="#a0a0a0"/><rect x="175" y="0" width="23" height="22.6" fill="#fff"/><rect x="176" y="1" width="22" height="21.6" fill="#f0f0f0"/><rect x="200" y="0" width="25" height="24.4" fill="#696969"/><rect x="200" y="0" width="24" height="23.4" fill="#a0a0a0"/><rect x="200" y="0" width="23" height="22.6" fill="#fff"/><rect x="201" y="1" width="22" height="21.6" fill="#f0f0f0"/><rect x="225" y="0" width="25" height="24.4" fill="#696969"/><rect x="225" y="0" width="24" height="23.4" fill="#a0a0a0"/><rect x="225" y="0" width="23" height="22.6" fill="#fff"/><rect x="226" y="1" width="22" height="21.6" fill="#f0f0f0"/><rect x="250" y="0" width="25" height="24.4" fill="#696969"/><rect x="250" y="0" width="24" height="23.4" fill="#a0a0a0"/><rect x="250" y="0" width="23" height="22.6" fill="#fff"/><rect x="251" y="1" width="22" height="21.6" fill="#f0f0f0"/><rect x="275" y="0" width="25" height="24.4" fill="#696969"/><rect x="275" y="0" width="24" height="23.4" fill="#a0a0a0"/><rect x="275" y="0" width="23" height="22.6" fill="#fff"/><rect x="276" y="1" width="22" height="21.6" fill="#f0f0f0"/><rect x="300" y="0" width="25" height="24.4" fill="#696969"/><rect x="300" y="0" width="24" height="23.4" fill="#a0a0a0"/><rect x="300" y="0" width="23" height="22.6" fill="#fff"/><rect x="301" y="1" width="22" height="21.6" fill="#f0f0f0"/><rect x="325" y="0" width="25" height="24.4" fill="#696969"/><rect x="325" y="0" width="24" height="23.4" fill="#a0a0a0"/><rect x="325" y="0" width="23" height="22.6" fill="#fff"/><rect x="326" y="1" width="22" height="21.6" fill="#f0f0f0"/><rect x="350" y="0" width="25" height="24.4" fill="#696969"/><rect x="350" y="0" width="24" height="23.4" fill="#a0a0a0"/><rect x="350" y="0" width="23" height="22.6" fill="#fff"/><rect x="351" y="1" width="22" height="21.6" fill="#f0f0f0"/><rect x="375" y="0" width="25" height="24.4" fill="#696969"/><rect x="375" y="0" width="24" height="23.4" fill="#a0a0a0"/><rect x="375" y="0" width="23" height="22.6" fill="#fff"/><rect x="376" y="1" width="22" height="21.6" fill="#f0f0f0"/><rect x="400" y="0" width="25" height="24.4" fill="#696969"/><rect x="400" y="0" width="24" height="23.4" fill="#a0a0a0"/><rect x="400" y="0" width="23" height="22.6" fill="#fff"/><rect x="401" y="1" width="22" height="21.6" fill="#f0f0f0"/><rect x="425" y="0" width="25" height="24.4" fill="#696969"/><rect x="425" y="0" width="24" height="23.4" fill="#a0a0a0"/><rect x="425" y="0" width="23" height="22.6" fill="#fff"/><rect x="426" y="1" width="22" height="21.6" fill="#f0f0f0"/><rect x="450" y="0" width="25" height="24.4" fill="#696969"/><rect x="450" y="0" width="24" height="23.4" fill="#a0a0a0"/><rect x="450" y="0" width="23" height="22.6" fill="#fff"/><rect x="451" y="1" width="22" height="21.6" fill="#f0f0f0"/><rect x="475" y="0" width="25" height="24.4" fill="#696969"/><rect x="475" y="0" width="24" height="23.4" fill="#a0a0a0"/><rect x="475" y="0" width="23" height="22.6" fill="#fff"/><rect x="476" y="1" width="22" height="21.6" fill="#f0f0f0"/><rect x="500" y="0" width="25" height="24.4" fill="#696969"/><rect x="500" y="0" width="24" height="23.4" fill="#a0a0a0"/><rect x="500" y="0" width="23" height="22.6" fill="#fff"/><rect x="501" y="1" width="22" height="21.6" fill="#f0f0f0"/><rect x="525" y="0" width="25" height="24.4" fill="#696969"/><rect x="525" y="0" width="24" height="23.4" fill="#a0a0a0"/><rect x="525" y="0" width="23" height="22.6" fill="#fff"/><rect x="526" y="1" width="22" height="21.6" fill="#f0f0f0"/><g transform="translate(0,0)"><rect x="6" y="6" width="2" height="15" fill="#000"/><path d="M18 6 L18 21 L10 13.5Z" fill="#000"/></g><g transform="translate(25,0)"><path d="M15 6 L15 21 L7 13.5Z" fill="#000"/></g><g transform="translate(50,0)"><path d="M12.8 5.2 L21.3 19.8 L4.3 19.8Z" fill="#a4a4a4" stroke="#5a5a5a" stroke-width="1.5" stroke-linejoin="round"/><path d="M11.9 8.6 h2 l-0.4 6.6 h-1.2z" fill="#fff"/><circle cx="12.9" cy="17.7" r="1.25" fill="#fff"/></g><g transform="translate(75,0)"><rect x="3" y="4" width="19" height="16.5" fill="#ffe020"/><rect x="3.5" y="5.5" width="17.5" height="13.5" fill="#e81010"/><rect x="3.5" y="6" width="5.5" height="10" fill="#f4f4f0"/><path d="M11 16 L13 6 H20 Q21 6 21 7 V19 H10.5Z" fill="#181820"/><rect x="14" y="7" width="5.5" height="4" fill="#2070c8"/></g><g transform="translate(100,0)"><rect x="3" y="3" width="19" height="19" fill="url(#gsky)"/><path d="M4 19.5 L15.5 12.5 Q14.8 10 17 9.4 L17.8 11 L19.3 10.6 L19.5 9 Q21.5 10.5 20 12.5 Q18.5 14.2 16.5 13.8 L5 21Z" fill="#e8e8e8" stroke="#888" stroke-width="0.6"/><path d="M4.5 6.5 L8 4.5 L12.5 9 L9 11.5Z" fill="#d8d8d8" stroke="#777" stroke-width="0.6"/><path d="M6 4 L9.5 3 L10.5 4.5 L7 6Z" fill="#666"/></g><g transform="translate(125,0)"><rect x="2" y="3" width="20" height="19.5" fill="url(#gor)"/><circle cx="12.3" cy="13" r="6.3" fill="#fff" stroke="#101010" stroke-width="1.2" stroke-dasharray="3 1.2"/><circle cx="12.3" cy="13" r="4.6" fill="#3080d8"/><path d="M9.5 15.5 L15 10.5" stroke="#80b8f0" stroke-width="1.5"/></g><g transform="translate(150,0)"><rect x="2" y="3" width="20" height="19.5" fill="#fff"/><rect x="3" y="4" width="18" height="10.6" fill="#ffff00"/><circle cx="13.2" cy="15.2" r="5.3" fill="#888"/><path d="M10.5 15 Q13 13 15 16 Q14 19.5 11.5 19Z" fill="#e8e8e8"/><path d="M3.5 10.5 L6 9 L7.5 10.5 L5 12Z M5.5 8 v2" fill="none" stroke="#10a010" stroke-width="1"/><path d="M11 5 L13.5 4.5 M13.5 5.5 L20.5 10.5 M17 11 l2 -1.5" stroke="#205020" stroke-width="1" stroke-dasharray="2 1" fill="none"/></g><g transform="translate(175,0)"><rect x="2" y="3" width="20" height="19.5" fill="url(#gbl)"/><circle cx="13.8" cy="12.4" r="7.3" fill="#484848"/><circle cx="13.8" cy="12.4" r="5" fill="#a8a8b0"/><circle cx="13.8" cy="12.4" r="1.6" fill="#d8d8e0"/><g fill="#88a0e8"><circle cx="13.8" cy="9.3" r="1"/><circle cx="16.7" cy="11.4" r="1"/><circle cx="15.6" cy="14.9" r="1"/><circle cx="12" cy="14.9" r="1"/><circle cx="10.9" cy="11.4" r="1"/></g><circle cx="4.6" cy="11.6" r="1.7" fill="#e0d8d8"/><path d="M4.6 13 Q4 17 7 17.5" stroke="#c8c8d0" stroke-width="1.2" fill="none"/></g><g transform="translate(200,0)"><rect x="3" y="3" width="19" height="19.5" fill="#70d4f6"/><path d="M10 3 H22 V12 Q19 14 17 12 Q14 14 12 11 Q9 9 10 3Z" fill="url(#ggy)"/><circle cx="15.3" cy="6" r="2.2" fill="#70d4f6"/><circle cx="21.5" cy="7" r="1.5" fill="#70d4f6"/><path d="M5.5 3.5 Q8 6 7 9 Q9 13 8 16 Q9.5 19 8.5 22.5 H7 Q7.5 18 6.5 15 Q6 11 6.5 8 Q5 6 5.5 3.5Z" fill="#707070"/><path d="M16 22.5 Q19 19 21.5 20 V22.5Z" fill="#606060"/></g><g transform="translate(225,0)"><rect x="2" y="3" width="20" height="19.5" fill="#fff088"/><rect x="2" y="3" width="20" height="6" fill="#ffe020"/><path d="M22 3 V10 H15Z" fill="#f07010"/><path d="M2 7 Q4 5.5 8 6.5 L13 9.5 L14 12.5 H2Z" fill="#e81818"/><path d="M2 6.5 Q4 6 5 7" stroke="#fff" stroke-width="1.2" fill="none"/><path d="M8 7 L15 4" stroke="#e82020" stroke-width="0.8"/><path d="M22 10.5 V22.5 H3.5 L11 12 Z" fill="#b8b8b8"/><path d="M3 22.5 L12 11.5" stroke="#707070" stroke-width="1"/><rect x="10.5" y="17.2" width="10" height="3.6" rx="1.8" fill="#f8e818" stroke="#606000" stroke-width="0.5"/><circle cx="16.5" cy="12.5" r="1.8" fill="#c8b820"/></g><g transform="translate(250,0)"><rect x="2.5" y="3" width="19.5" height="19.5" fill="url(#ggr)"/><rect x="4.6" y="4" width="1.4" height="18" fill="#101010"/><rect x="7.2" y="6" width="1.2" height="14" fill="#203828"/><rect x="16.6" y="6" width="1.2" height="14" fill="#203828"/><rect x="19" y="4" width="1.4" height="18" fill="#101010"/><path d="M8.6 10.5 Q9 8 12.5 8 Q16 8 16.4 10.5 V13.5 H8.6Z" fill="#e82828"/><path d="M9.6 9.6 Q12.5 8.2 15.4 9.6" stroke="#fff" stroke-width="1" fill="none"/><rect x="9" y="11.2" width="7" height="1" fill="#f8a0a0"/></g><g transform="translate(275,0)"><rect x="2.5" y="3" width="19.5" height="19.5" fill="url(#gye)"/><path d="M22 3 V22.5 H3.5Z" fill="#909090"/><path d="M22 3 L3.5 22.5" stroke="#303030" stroke-width="0.8"/><path d="M4 12.5 L7 10.5 H14 L4 20.5Z" fill="#1868c8"/><path d="M7.5 4 v3 M6.2 7 h2.6 l-1.3 1.8z M17.5 8.5 v-3 M16.2 6 h2.6 l-1.3 -2z" stroke="#000" stroke-width="1" fill="#000"/><rect x="7" y="17.8" width="13.5" height="4" rx="2" fill="#fff"/><text x="13.6" y="21.3" font-size="4.2" font-weight="bold" text-anchor="middle" fill="#222" font-family="Liberation Sans, sans-serif">EPB</text><path d="M15 12 l3 -3 M17.5 14.5 l3.5 -3.5" stroke="#d8d8d8" stroke-width="1.6"/></g><g transform="translate(300,0)"><rect x="3" y="3" width="19" height="19.5" fill="url(#gor)"/><path d="M5 17 L11.5 10.5 L15 12.5 L9.5 21 Q6 22 5 17Z" fill="#8890a0" stroke="#303848" stroke-width="0.8"/><path d="M13 11 L18.5 5 L19.5 6 L14.8 12Z" fill="#d0d0d0" stroke="#888" stroke-width="0.4"/><rect x="8.2" y="13" width="3" height="3" fill="#181818" transform="rotate(-45 9.7 14.5)"/><circle cx="8" cy="18" r="1.2" fill="#c02020"/></g><g transform="translate(325,0)"><rect x="3" y="4" width="18.5" height="18" fill="#00ffff"/><rect x="5" y="4.6" width="5.6" height="5.4" fill="#ffff00"/><rect x="13" y="4.6" width="5.6" height="5.4" fill="#ffff00"/><path d="M6.5 8.6 h2.8 M7.9 5.6 l-1.2 1.8 h2.4z" stroke="#000" stroke-width="0.9" fill="#000"/><path d="M14.5 6 h2.8 v2.8 M17 8.5 l-2 -2" stroke="#000" stroke-width="1.1" fill="none"/><rect x="5" y="12.4" width="14" height="9" fill="#ffff00"/><path d="M7 16 L9 13.5 H15 L17.5 16.5 V19.5 L15.5 21 H10 L7 19.5Z" fill="#e80000"/><path d="M10 17.5 L12 15 H15 L16.5 17 V19.5 H11Z" fill="#980000"/><path d="M6.4 17.5 v3" stroke="#000" stroke-width="0.9"/><ellipse cx="12" cy="17" rx="1" ry="0.7" fill="#f0d0d0"/></g><g transform="translate(350,0)"><rect x="3" y="4" width="18.5" height="18" fill="#00ff00"/><path d="M5.5 14 L7.5 7.5 L9 6.5 H17 L18.5 8.5 L19.5 14Z" fill="#f4f4f4"/><path d="M8.5 8 H17 L17.5 9.5 H8Z" fill="#b0b0b0"/><rect x="6" y="14" width="13" height="5" fill="#fff"/><rect x="7.5" y="15.2" width="10" height="3" fill="#a8a8a8"/><path d="M4.5 13 L7 14 V16 L5.5 16.6Z" fill="#fff"/><rect x="19.2" y="13" width="1" height="1.4" fill="#e01010"/><rect x="19.2" y="9.5" width="0.9" height="1" fill="#1010c0"/><rect x="19.2" y="15.5" width="0.9" height="1" fill="#1010c0"/></g><g transform="translate(375,0)"><rect x="3" y="4" width="18.5" height="18" fill="#00ffff"/><rect x="3.5" y="5.5" width="17.5" height="2.2" fill="#888"/><path d="M3.5 6.6 h17.5" stroke="#222" stroke-width="0.8" stroke-dasharray="1 0.8"/><path d="M6 16.5 L15 10 L21 14 L11 21Z" fill="#181818"/><path d="M11 14.5 l4.5 4 M13.5 12.8 l4.5 4 M16 11.4 l4 3.6" stroke="#fff" stroke-width="1.3"/><path d="M4 19.5 L10 22 L21 15" stroke="#e8e8e8" stroke-width="1.4" fill="none"/><path d="M6.8 7.8 V9.5 H5.2 V16" stroke="#e01010" stroke-width="0.9" fill="none"/><path d="M16.5 7.5 V9.5 L8 15.5 V20" stroke="#000" stroke-width="0.9" fill="none"/></g><g transform="translate(400,0)"><text x="3" y="10" font-size="9" fill="#b8b8b8" font-family="Liberation Sans, sans-serif">?</text><path d="M9 7 Q13 3.5 17 6.5 L21 11 H10Z" fill="none" stroke="#c4c4c4" stroke-width="1.2"/><path d="M7 13 Q12 11 21 13.5 V17 H9Z" fill="#d4d4d4"/><circle cx="15.5" cy="17.5" r="2.2" fill="#c0c0c0" stroke="#e8e8e8" stroke-width="0.8"/><path d="M8 15 Q9 20 14 20" stroke="#c0c0c0" stroke-width="1.2" fill="none"/></g><g transform="translate(425,0)"><path d="M14 4 Q10 5 9.5 9 L6 12 L10 12.5 Q8 17 5 20 M13 9 L18 4 M11 14 Q15 12 15 17 L19 15" stroke="#b8b8b8" stroke-width="1.6" fill="none"/><ellipse cx="11" cy="20" rx="6.5" ry="2.2" fill="none" stroke="#c0c0c0" stroke-width="0.9"/><path d="M19.5 5.5 v3" stroke="#d09090" stroke-width="0.8"/></g><g transform="translate(450,0)"><ellipse cx="11.8" cy="10" rx="6.2" ry="7" fill="#b4b4b4"/><ellipse cx="11.8" cy="10" rx="6.2" ry="7" fill="none" stroke="#d8d8d8" stroke-width="0.8"/><ellipse cx="11.5" cy="19.8" rx="8.6" ry="2.3" fill="#fafafa" stroke="#b8b8b8" stroke-width="0.8"/><path d="M9 19.8 h5" stroke="#b0b0b0" stroke-width="1"/></g><g transform="translate(475,0)"><path d="M12.3 3.8 L19.5 17 Q21 21.5 17 22 H7 Q3 21.5 5 17Z" fill="#f6f6f6" stroke="#b8b8b8" stroke-width="0.9"/><path d="M10 8.5 l4.5 5 M14.5 8.5 l-4.5 5 M12.3 7 v4" stroke="#a8a8a8" stroke-width="0.9"/><path d="M6.5 16.2 H18" stroke="#b8b8b8" stroke-width="0.8"/><rect x="9.5" y="18.2" width="5.5" height="2.2" fill="#a0a0a0"/></g><g transform="translate(500,0)"><rect x="2.5" y="3" width="19.5" height="19.5" fill="#f8f4d0"/><rect x="3" y="3.500" width="18.500" height="18.500" fill="none" stroke="#c8c8a0" stroke-width="0.600" stroke-dasharray="1 1"/><path d="M3.500 13 Q4 9.500 8 9 L13.500 6.500 Q18 5.500 20 8 L21 11.500 Q21 15 17 16 L10 19 Q5 19.500 3.500 16Z" fill="#68b4d8" stroke="#3070a0" stroke-width="0.800"/><path d="M6 12.500 L18 8.500 M8 16.500 L19.500 12.500 M9 9.500 l2 8 M14 7.500 l2 8" stroke="#e8f4f8" stroke-width="1.300"/><path d="M6.500 14.500 l11 -4" stroke="#3878a8" stroke-width="0.700"/><circle cx="6" cy="18.500" r="0.900" fill="#d02020"/><circle cx="17" cy="19" r="0.900" fill="#20a040"/><circle cx="13" cy="20" r="0.700" fill="#888"/><circle cx="17" cy="6" r="0.800" fill="#d0a020"/></g><g transform="translate(525,0)"><rect x="2.5" y="3" width="19.5" height="19.5" fill="#ffff80"/><rect x="5" y="6" width="12" height="13.5" fill="#f4f4f4" stroke="#b8b8b8" stroke-width="0.8"/><rect x="7" y="7.5" width="5" height="10.5" fill="#e4e4e4" stroke="#c0c0c0" stroke-width="0.5"/><rect x="13.5" y="6.5" width="3" height="12.5" fill="#c8c8c8"/><ellipse cx="12.2" cy="12.5" rx="0.8" ry="1.6" fill="#181818"/><path d="M8 12 h2" stroke="#909090" stroke-width="0.7"/></g></svg>
<svg class="abs" style="left:1500px;top:0" width="100" height="23" viewBox="0 0 100 23">
<rect x="14" y="10" width="2" height="2" fill="#222"/>
<rect x="33.5" y="6.5" width="7.5" height="6.500" fill="none" stroke="#222" stroke-width="1"/><path d="M35.5 6.5 V4.5 H43 V11 H41" fill="none" stroke="#222" stroke-width="1"/>
<path d="M71.5 5.5 L78.5 12.5 M78.5 5.5 L71.5 12.5" stroke="#fff" stroke-width="1.7"/>
</svg><svg class="abs" style="left:0;top:0" width="24" height="23" viewBox="0 0 24 23"><defs><clipPath id="cpa"><circle cx="10" cy="11" r="8"/></clipPath></defs><g clip-path="url(#cpa)"><rect x="0" y="0" width="24" height="23" fill="#283458"/><path d="M0 0 H8 L6 12 L0 14Z" fill="#c83038"/><path d="M2 14 L18 9 V13 L4 20Z" fill="#787c88"/><circle cx="10.2" cy="11" r="1.3" fill="#f0d890"/></g></svg>
</body></html>
